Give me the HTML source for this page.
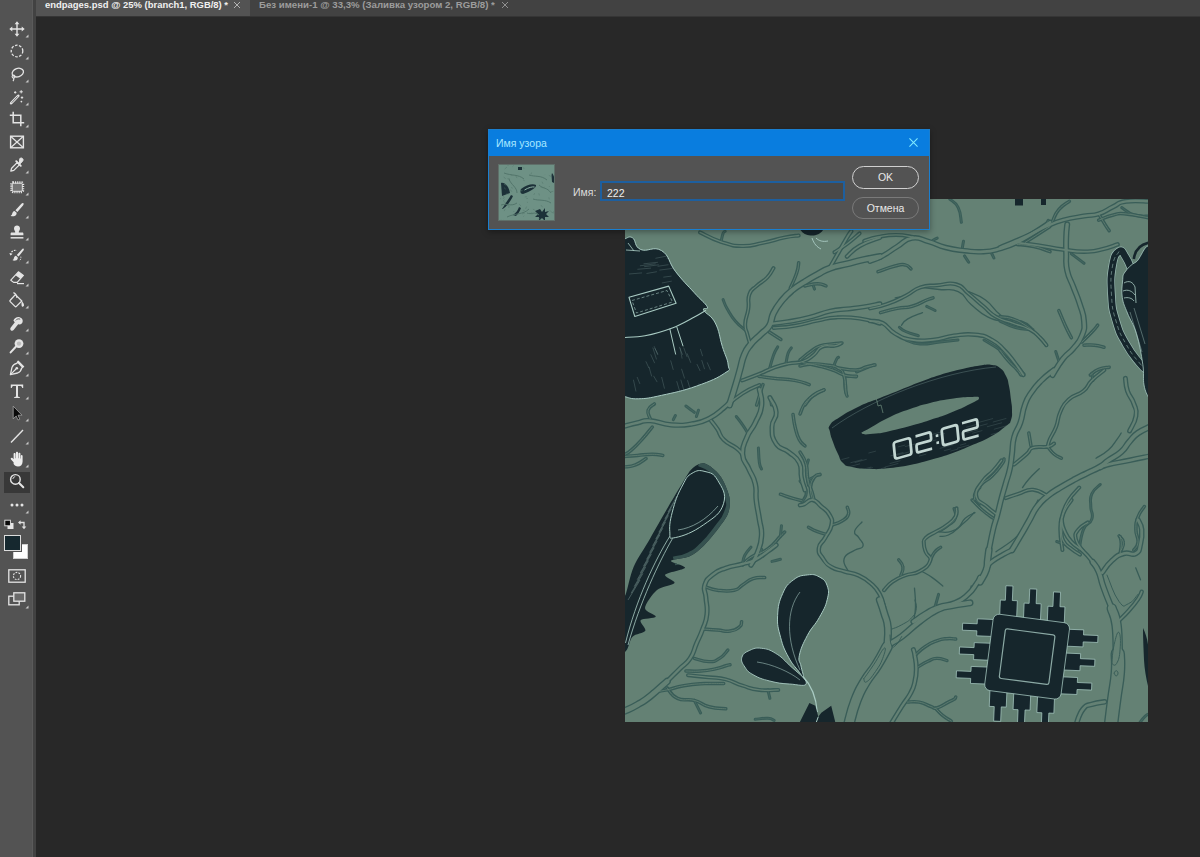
<!DOCTYPE html>
<html><head><meta charset="utf-8">
<style>
*{box-sizing:border-box;margin:0;padding:0}
html,body{width:1200px;height:857px;overflow:hidden;background:#282828;font-family:"Liberation Sans",sans-serif;}
#tabbar{position:absolute;left:0;top:0;width:1200px;height:17px;background:#424242;border-bottom:1px solid #353535;}
.tab{position:absolute;top:0;height:17px;font-weight:bold;font-size:9px;line-height:10px;white-space:nowrap;}
#tab1{left:36px;width:214px;height:16px;background:#535353;color:#f0f0f0;}
#tab2{left:250px;width:266px;color:#9c9c9c;}
#tab2 span.t{transform:scaleX(1.072)}
.tab span.t{position:absolute;left:9px;top:0px;display:inline-block;transform-origin:0 0;transform:scaleX(1.050);}
.tab svg{position:absolute;top:2px;}
#toolbar{position:absolute;left:0;top:0;width:33px;height:857px;background:#535353;}
#tbedge{position:absolute;left:32px;top:0;width:4px;height:857px;background:#424242;border-left:1px solid #5b5b5b;}
#art{position:absolute;left:625px;top:199px;width:523px;height:523px;background:#648174;overflow:hidden;}
</style></head><body>
<div id="tabbar">
  <div class="tab" id="tab1"><span class="t">endpages.psd @ 25% (branch1, RGB/8) *</span>
    <svg style="left:197px;top:1px" width="8" height="8" viewBox="0 0 8 8"><path d="M1 1l6 6M7 1L1 7" stroke="#bdbdbd" stroke-width="0.9"/></svg></div>
  <div class="tab" id="tab2"><span class="t">Без имени-1 @ 33,3% (Заливка узором 2, RGB/8) *</span>
    <svg style="left:251px;top:1px" width="8" height="8" viewBox="0 0 8 8"><path d="M1 1l6 6M7 1L1 7" stroke="#9a9a9a" stroke-width="0.9"/></svg></div>
</div>
<div id="toolbar">
<div id="zoomhl" style="position:absolute;left:4px;top:472px;width:26px;height:21px;background:#383838;"></div>
<svg style="position:absolute;left:9px;top:21px" width="16" height="16" viewBox="0 0 16 16"><path d="M8 2v12M2 8h12" stroke="#e4e4e4" stroke-width="1.4" fill="none"/><path d="M8 0.3l2.4 3h-4.8zM8 15.7l2.4-3h-4.8zM0.3 8l3-2.4v4.8zM15.7 8l-3-2.4v4.8z" fill="#e4e4e4"/></svg>
<svg style="position:absolute;left:25px;top:34px" width="4" height="4" viewBox="0 0 4 4"><path d="M3.500 0.500v3h-3z" fill="#c8c8c8"/></svg>
<svg style="position:absolute;left:9px;top:43px" width="16" height="16" viewBox="0 0 16 16"><circle cx="8" cy="8" r="5.8" stroke="#e4e4e4" stroke-width="1.3" fill="none" stroke-dasharray="2.6 1.5"/></svg>
<svg style="position:absolute;left:25px;top:56px" width="4" height="4" viewBox="0 0 4 4"><path d="M3.500 0.500v3h-3z" fill="#c8c8c8"/></svg>
<svg style="position:absolute;left:9px;top:66px" width="16" height="16" viewBox="0 0 16 16"><ellipse cx="8.8" cy="6.6" rx="5.8" ry="4.2" transform="rotate(-18 8.8 6.6)" stroke="#e4e4e4" stroke-width="1.3" fill="none"/><circle cx="4.6" cy="10.6" r="1.5" stroke="#e4e4e4" stroke-width="1.1" fill="none"/><path d="M4.6 12c0.4 1.2 0.2 2.2-0.6 3.2" stroke="#e4e4e4" stroke-width="1.2" fill="none"/></svg>
<svg style="position:absolute;left:25px;top:79px" width="4" height="4" viewBox="0 0 4 4"><path d="M3.500 0.500v3h-3z" fill="#c8c8c8"/></svg>
<svg style="position:absolute;left:9px;top:89px" width="16" height="16" viewBox="0 0 16 16"><path d="M2.2 14.2l7-7.4" stroke="#e4e4e4" stroke-width="2.6" stroke-linecap="round"/><path d="M3 13.4l5.4-5.7" stroke="#535353" stroke-width="0.8" stroke-linecap="round"/><path d="M12.2 1.2v3.2M10.6 2.8h3.2M6.2 2.2v2.4M5 3.4h2.4M13 7.4v2.4M11.8 8.6h2.4M12.4 11.8v1.6M11.6 12.6h1.6" stroke="#e4e4e4" stroke-width="1"/></svg>
<svg style="position:absolute;left:25px;top:102px" width="4" height="4" viewBox="0 0 4 4"><path d="M3.500 0.500v3h-3z" fill="#c8c8c8"/></svg>
<svg style="position:absolute;left:9px;top:111px" width="16" height="16" viewBox="0 0 16 16"><path d="M4.2 0.8v11h11M0.8 4.2h11v11" stroke="#e4e4e4" stroke-width="1.5" fill="none"/></svg>
<svg style="position:absolute;left:25px;top:124px" width="4" height="4" viewBox="0 0 4 4"><path d="M3.500 0.500v3h-3z" fill="#c8c8c8"/></svg>
<svg style="position:absolute;left:9px;top:134px" width="16" height="16" viewBox="0 0 16 16"><rect x="1.6" y="2.2" width="12.8" height="11.6" stroke="#e4e4e4" stroke-width="1.4" fill="none"/><path d="M1.6 2.2l12.8 11.6M14.4 2.2L1.6 13.8" stroke="#e4e4e4" stroke-width="1.2"/></svg>
<svg style="position:absolute;left:9px;top:157px" width="16" height="16" viewBox="0 0 16 16"><path d="M1.800 14.200l0.800-3 5.800-5.800 2.200 2.200-5.800 5.800z" stroke="#e4e4e4" stroke-width="1.300" fill="none" stroke-linejoin="round"/><path d="M7.200 4.200l4.600 4.600" stroke="#e4e4e4" stroke-width="1.900" stroke-linecap="round"/><path d="M9.400 6.600l3.200-3.200a1.900 1.900 0 0 0-2.700-2.700z" fill="#e4e4e4" stroke="#e4e4e4" stroke-width="1" transform="translate(0.900 0.900)"/></svg>
<svg style="position:absolute;left:25px;top:170px" width="4" height="4" viewBox="0 0 4 4"><path d="M3.500 0.500v3h-3z" fill="#c8c8c8"/></svg>
<svg style="position:absolute;left:9px;top:179px" width="16" height="16" viewBox="0 0 16 16"><rect x="3" y="4" width="10.500" height="8.500" rx="1.200" fill="#747474"/><rect x="2.400" y="3.400" width="11.700" height="9.700" rx="1.500" stroke="#e4e4e4" stroke-width="2.200" fill="none" stroke-dasharray="1.100 1.050"/><rect x="3.200" y="4.200" width="10.100" height="8.100" rx="1" stroke="#e4e4e4" stroke-width="0.900" fill="none"/></svg>
<svg style="position:absolute;left:25px;top:192px" width="4" height="4" viewBox="0 0 4 4"><path d="M3.500 0.500v3h-3z" fill="#c8c8c8"/></svg>
<svg style="position:absolute;left:9px;top:202px" width="16" height="16" viewBox="0 0 16 16"><path d="M14.4 1.2c0.6 0.6 0.2 1.4-0.4 2.2L8.4 10 6.4 8.2l6-6.4c0.6-0.7 1.4-1.2 2-0.6z" fill="#e4e4e4"/><path d="M5.6 9l2 1.8c0.2 1.6-0.8 3-2.6 3.4-1.200.3-2.400.2-3.400-0.400 1.200-0.400 1.400-1.200 1.600-2.200 0.300-1.400 1.200-2.400 2.400-2.600z" fill="#e4e4e4"/></svg>
<svg style="position:absolute;left:25px;top:215px" width="4" height="4" viewBox="0 0 4 4"><path d="M3.500 0.500v3h-3z" fill="#c8c8c8"/></svg>
<svg style="position:absolute;left:9px;top:224px" width="16" height="16" viewBox="0 0 16 16"><path d="M6.200 8.400c0.300-1.300-1.200-2.200-1.200-4 0-1.700 1.300-3 3-3s3 1.300 3 3c0 1.800-1.500 2.700-1.200 4h3.400c0.800 0 1.200 0.500 1.200 1.200v1.600H1.600V9.600c0-0.700 0.400-1.200 1.200-1.200z" fill="#e4e4e4"/><path d="M1.600 13.800h12.800" stroke="#e4e4e4" stroke-width="1.500"/></svg>
<svg style="position:absolute;left:25px;top:237px" width="4" height="4" viewBox="0 0 4 4"><path d="M3.500 0.500v3h-3z" fill="#c8c8c8"/></svg>
<svg style="position:absolute;left:9px;top:247px" width="16" height="16" viewBox="0 0 16 16"><path d="M14.600 1.800c0.500 0.500 0.200 1.200-0.400 2L9.600 9.600 7.800 8l5-5.600c0.600-0.600 1.300-1.100 1.800-0.600z" fill="#e4e4e4"/><path d="M7 8.800l1.800 1.600c0.200 1.500-0.700 2.700-2.300 3.100-1.100 0.300-2.200 0.200-3.100-0.400 1.100-0.400 1.300-1.100 1.500-2 0.300-1.300 1-2.100 2.100-2.300z" fill="#e4e4e4"/><path d="M1.600 7.600a4.600 4.600 0 0 1 6-4" stroke="#e4e4e4" stroke-width="1.100" fill="none" stroke-dasharray="1.600 1"/><path d="M0.200 6.200l1.400 2.400 2-1.800z" fill="#e4e4e4"/><path d="M11.800 9.600c0.400 1.600-0.200 3.400-1.400 4.400" stroke="#e4e4e4" stroke-width="0.900" fill="none" stroke-dasharray="1.200 1"/></svg>
<svg style="position:absolute;left:25px;top:260px" width="4" height="4" viewBox="0 0 4 4"><path d="M3.500 0.500v3h-3z" fill="#c8c8c8"/></svg>
<svg style="position:absolute;left:9px;top:270px" width="16" height="16" viewBox="0 0 16 16"><path d="M9.400 1.800l5 3.600-6.200 7H4.600L1.800 10.200z" stroke="#e4e4e4" stroke-width="1.200" fill="none" stroke-linejoin="round"/><path d="M9.400 1.800l5 3.600-3 3.400-5-3.600z" fill="#e4e4e4"/><path d="M8 13.600h7" stroke="#e4e4e4" stroke-width="1.200"/></svg>
<svg style="position:absolute;left:25px;top:283px" width="4" height="4" viewBox="0 0 4 4"><path d="M3.500 0.500v3h-3z" fill="#c8c8c8"/></svg>
<svg style="position:absolute;left:9px;top:292px" width="16" height="16" viewBox="0 0 16 16"><path d="M6.400 2.600l6.400 6.400-5.400 5.400c-0.400 0.400-1 0.400-1.400 0L1.200 9.600c-0.400-0.400-0.400-1 0-1.400z" stroke="#e4e4e4" stroke-width="1.300" fill="none" stroke-linejoin="round"/><path d="M4.400 0.600c1.800 0.600 3.200 2.600 3.600 5.400" stroke="#e4e4e4" stroke-width="1.200" fill="none"/><path d="M12.800 9c1.400 1.600 2.400 3.200 2.200 4.600-0.200 1.200-1.600 1.600-2.200 0.600-0.600-1.200-0.200-3.400 0-5.200z" fill="#e4e4e4"/></svg>
<svg style="position:absolute;left:25px;top:305px" width="4" height="4" viewBox="0 0 4 4"><path d="M3.500 0.500v3h-3z" fill="#c8c8c8"/></svg>
<svg style="position:absolute;left:9px;top:315px" width="16" height="16" viewBox="0 0 16 16"><path d="M4.400 5.600c1-2.600 3.600-4 6.200-3.400 2.400 0.600 3.600 2.600 3 4.800-0.400 1.600-1.600 2.400-3 2.600l-1.400-0.400-4.600 5.800c-0.600 0.800-1.800 1-2.600 0.400-0.800-0.600-1-1.800-0.400-2.600l4.200-5.600z" fill="#e4e4e4"/><path d="M6.800 5.400c1-1.400 2.800-2 4.400-1.200" stroke="#535353" stroke-width="0.900" fill="none"/></svg>
<svg style="position:absolute;left:25px;top:328px" width="4" height="4" viewBox="0 0 4 4"><path d="M3.500 0.500v3h-3z" fill="#c8c8c8"/></svg>
<svg style="position:absolute;left:9px;top:338px" width="16" height="16" viewBox="0 0 16 16"><circle cx="10" cy="5.600" r="4.400" fill="#e4e4e4"/><path d="M6.800 8.800L1.600 14.400" stroke="#e4e4e4" stroke-width="2" stroke-linecap="round"/><circle cx="10" cy="5.600" r="2.200" fill="#bdbdbd"/></svg>
<svg style="position:absolute;left:25px;top:351px" width="4" height="4" viewBox="0 0 4 4"><path d="M3.500 0.500v3h-3z" fill="#c8c8c8"/></svg>
<svg style="position:absolute;left:9px;top:360px" width="16" height="16" viewBox="0 0 16 16"><path d="M9.200 1.200l5.400 5.400-2 1.600c-0.400 2.400-1.800 4-4 4.800L1.400 14.600l1.600-7.200c0.800-2.200 2.400-3.600 4.800-4z" stroke="#e4e4e4" stroke-width="1.300" fill="none" stroke-linejoin="round"/><path d="M1.600 14.400l5.400-5.400" stroke="#e4e4e4" stroke-width="1.100"/><circle cx="7.800" cy="8.200" r="1.300" fill="#e4e4e4"/><path d="M9.200 1.200l5.400 5.400-1.400 1.200-5.200-5.400z" fill="#e4e4e4"/></svg>
<svg style="position:absolute;left:25px;top:373px" width="4" height="4" viewBox="0 0 4 4"><path d="M3.500 0.500v3h-3z" fill="#c8c8c8"/></svg>
<svg style="position:absolute;left:9px;top:383px" width="16" height="16" viewBox="0 0 16 16"><path d="M1.800 1.600h12.400v3.400h-1c-0.200-1.400-0.800-2-2.200-2H9v9.800c0 0.800 0.400 1.200 1.800 1.300v0.900H5.200v-0.900C6.600 14 7 13.600 7 12.800V3H5c-1.400 0-2 0.600-2.200 2h-1z" fill="#e4e4e4"/></svg>
<svg style="position:absolute;left:25px;top:396px" width="4" height="4" viewBox="0 0 4 4"><path d="M3.500 0.500v3h-3z" fill="#c8c8c8"/></svg>
<svg style="position:absolute;left:9px;top:405px" width="16" height="16" viewBox="0 0 16 16"><path d="M4.200 1.200v12.600l3-2.800 1.800 4 1.800-0.800-1.800-4h4z" fill="#0a0a0a" stroke="#b0b0b0" stroke-width="0.700" stroke-linejoin="round"/></svg>
<svg style="position:absolute;left:25px;top:418px" width="4" height="4" viewBox="0 0 4 4"><path d="M3.500 0.500v3h-3z" fill="#c8c8c8"/></svg>
<svg style="position:absolute;left:9px;top:428px" width="16" height="16" viewBox="0 0 16 16"><path d="M2 14.400L14 2" stroke="#e4e4e4" stroke-width="1.400"/></svg>
<svg style="position:absolute;left:25px;top:441px" width="4" height="4" viewBox="0 0 4 4"><path d="M3.500 0.500v3h-3z" fill="#c8c8c8"/></svg>
<svg style="position:absolute;left:9px;top:451px" width="16" height="16" viewBox="0 0 16 16"><path d="M4.600 11.200L2 8.400c-0.900-1 0.500-2.300 1.500-1.400L4.600 8.200V3c0-1.300 2-1.300 2 0V7.200h0.400V1.600c0-1.300 2-1.300 2 0V7.200h0.400V2.600c0-1.300 2-1.300 2 0V7.600h0.400V5c0-1.200 1.800-1.200 1.800 0V10.500c0 3-1.800 5-4.600 5-2.200 0-3.400-1-4.400-2.500z" fill="#ededed"/></svg>
<svg style="position:absolute;left:25px;top:464px" width="4" height="4" viewBox="0 0 4 4"><path d="M3.500 0.500v3h-3z" fill="#c8c8c8"/></svg>
<svg style="position:absolute;left:9px;top:473px" width="16" height="16" viewBox="0 0 16 16"><circle cx="6.400" cy="6.400" r="4.800" stroke="#e6e6e6" stroke-width="1.400" fill="none"/><path d="M10 10l4.300 4.300" stroke="#e6e6e6" stroke-width="2" stroke-linecap="round"/><path d="M3.800 6a2.800 2.800 0 0 1 2.400-2.400" stroke="#e6e6e6" stroke-width="0.900" fill="none"/></svg>
<svg style="position:absolute;left:9px;top:497px" width="16" height="16" viewBox="0 0 16 16"><circle cx="3" cy="8" r="1.500" fill="#e4e4e4"/><circle cx="8" cy="8" r="1.500" fill="#e4e4e4"/><circle cx="13" cy="8" r="1.500" fill="#e4e4e4"/></svg>
<svg style="position:absolute;left:25px;top:510px" width="4" height="4" viewBox="0 0 4 4"><path d="M3.500 0.500v3h-3z" fill="#c8c8c8"/></svg>
<svg style="position:absolute;left:4px;top:519px" width="26" height="12" viewBox="0 0 26 12"><rect x="3.500" y="4" width="6" height="6" fill="#e6e6e6"/><rect x="0.800" y="1.200" width="5.600" height="5.600" fill="#0a0a0a" stroke="#e6e6e6" stroke-width="0.900"/><path d="M15.500 3.500h4.500v5" stroke="#e0e0e0" stroke-width="1.300" fill="none"/><path d="M16.600 1.200l-2.600 2.300 2.600 2.300zM17.700 7.400l2.300 2.800 2.300-2.800z" fill="#e0e0e0"/></svg>
<div style="position:absolute;left:13px;top:544px;width:15px;height:15px;background:#fff;border:1px solid #d0d0d0"></div>
<div style="position:absolute;left:4px;top:535px;width:17px;height:16px;background:#16282f;border:1px solid #dcdcdc;box-shadow:0 0 0 1px #535353"></div>
<svg style="position:absolute;left:8px;top:569px" width="18" height="14" viewBox="0 0 18 14"><rect x="0.800" y="0.800" width="16.400" height="12.400" stroke="#e4e4e4" stroke-width="1.300" fill="none"/><circle cx="9" cy="7" r="3.600" stroke="#e4e4e4" stroke-width="1.100" fill="none" stroke-dasharray="1.800 1.200"/></svg>
<svg style="position:absolute;left:8px;top:592px" width="18" height="14" viewBox="0 0 18 14"><rect x="0.800" y="4.200" width="10.400" height="8.600" stroke="#e4e4e4" stroke-width="1.300" fill="#535353"/><rect x="5.800" y="0.800" width="11" height="8.400" stroke="#e4e4e4" stroke-width="1.300" fill="#6a6a6a"/></svg>
<svg style="position:absolute;left:25px;top:605px" width="4" height="4" viewBox="0 0 4 4"><path d="M3.500 0.500v3h-3z" fill="#c8c8c8"/></svg></div><div id="tbedge"></div>
<div id="art">
<svg width="523" height="523" viewBox="625 199 523 523" style="position:absolute;left:0;top:0">
<rect x="625" y="199" width="523" height="523" fill="#648174"/>
<g fill="none" stroke="#395d58" stroke-linecap="round" stroke-linejoin="round"><path d="M880.0 256.5C875.7 257.3 872.6 257.7 863.8 259.7C855.0 261.6 856.0 261.6 847.0 263.9C838.1 266.1 838.1 265.3 830.2 268.1C822.4 270.9 824.3 270.7 817.6 274.4C810.9 278.0 811.7 277.5 805.0 281.7C798.3 285.9 798.6 285.1 792.4 290.1C786.3 295.2 787.0 294.5 781.9 300.6C776.9 306.8 776.9 306.5 773.5 313.2C770.2 319.9 772.7 320.2 769.3 325.8C766.0 331.4 766.0 329.2 760.9 334.2C755.9 339.3 754.9 339.1 750.4 344.7C745.9 350.3 746.9 348.5 744.1 355.2C741.3 361.9 742.1 362.1 739.9 369.9C737.7 377.8 738.5 375.3 735.7 384.6C732.9 394.0 731.1 399.6 729.4 405.0" stroke-width="7.0"/><path d="M830.2 267.0C832.5 263.1 834.1 260.1 838.6 252.3C843.1 244.5 843.7 243.2 847.0 237.6C850.4 232.0 850.1 233.0 851.2 231.3" stroke-width="4.5"/><path d="M847.0 256.5C850.4 253.7 850.8 251.0 859.6 246.0C868.4 241.0 874.6 239.8 880.0 237.6" stroke-width="4.5"/><path d="M834.4 252.3C837.8 250.1 840.3 248.9 847.0 243.9C853.7 238.9 856.3 236.2 859.6 233.4" stroke-width="4.0"/><path d="M700.0 232.4C705.6 234.9 709.8 238.2 721.0 241.8C732.2 245.4 730.8 245.7 742.0 246.0C753.2 246.3 751.8 245.1 763.0 242.9C774.2 240.6 774.5 239.6 784.0 237.6C793.5 235.6 794.8 236.1 798.7 235.5" stroke-width="4.0"/><path d="M721.0 241.8C721.6 239.6 722.0 236.2 723.1 233.4C724.2 230.6 724.6 231.9 725.2 231.3" stroke-width="3.0"/><path d="M790.3 288.0C792.0 284.1 794.4 280.0 796.6 273.3C798.9 266.6 798.2 265.6 798.7 262.8" stroke-width="3.5"/><path d="M805.0 285.9C808.4 285.4 812.0 283.8 817.6 283.8C823.2 283.8 823.8 285.4 826.0 285.9" stroke-width="3.5"/><path d="M813.4 285.9C813.7 286.8 814.2 288.2 814.5 289.1" stroke-width="3.0"/><path d="M771.4 323.7C775.9 323.2 778.1 323.3 788.2 321.6C798.3 319.9 798.0 320.2 809.2 317.4C820.4 314.6 820.1 313.4 830.2 311.1C840.3 308.9 838.1 310.1 847.0 309.0C856.0 307.9 855.0 308.3 863.8 306.9C872.6 305.5 875.7 304.6 880.0 303.8" stroke-width="5.0"/><path d="M773.5 327.9C779.1 327.4 782.8 327.8 794.5 325.8C806.3 323.9 806.4 322.8 817.6 320.6C828.8 318.3 825.3 318.0 836.5 317.4C847.7 316.9 848.0 316.8 859.6 318.5C871.2 320.1 874.6 322.3 880.0 323.7" stroke-width="4.0"/><path d="M769.3 332.1C772.4 334.1 777.8 337.5 780.9 339.5" stroke-width="3.5"/><path d="M750.4 344.7C749.6 341.9 748.7 339.8 747.3 334.2C745.9 328.6 744.9 330.4 745.2 323.7C745.4 317.0 747.2 316.9 748.3 309.0C749.4 301.2 747.1 300.5 749.4 294.3C751.6 288.2 751.9 290.4 756.7 285.9C761.5 281.4 762.7 282.3 767.2 277.5C771.7 272.7 771.8 270.6 773.5 268.1" stroke-width="4.0"/><path d="M745.2 330.0C742.6 327.8 740.5 327.2 735.7 321.6C730.9 316.0 730.7 314.9 727.3 309.0C723.9 303.1 724.2 302.1 723.1 299.6" stroke-width="3.0"/><path d="M742.0 380.4C746.5 378.7 750.4 377.5 758.8 374.1C767.2 370.8 765.7 370.6 773.5 367.8C781.4 365.0 780.4 365.3 788.2 363.6C796.1 361.9 796.2 363.8 802.9 361.5C809.6 359.3 808.4 359.1 813.4 355.2C818.5 351.3 816.2 349.3 821.8 346.8C827.4 344.3 829.4 346.6 834.4 345.8C839.5 344.9 839.0 344.2 840.7 343.7" stroke-width="4.0"/><path d="M802.9 362.6C806.8 363.4 809.8 363.8 817.6 365.7C825.5 367.7 825.0 367.4 832.3 369.9C839.6 372.4 838.5 373.5 844.9 375.2C851.4 376.9 853.4 375.9 856.5 376.2" stroke-width="3.5"/><path d="M832.3 369.9C833.4 367.1 834.8 362.8 836.5 359.4C838.2 356.1 838.1 357.9 838.6 357.3" stroke-width="3.0"/><path d="M844.9 375.2C844.9 378.3 844.6 382.0 844.9 386.7C845.2 391.5 845.7 391.4 846.0 393.0" stroke-width="3.0"/><path d="M856.5 372.0C861.2 370.1 869.6 366.6 874.3 364.7" stroke-width="3.0"/><path d="M769.3 369.9C770.4 366.0 771.3 361.4 773.5 355.2C775.8 349.1 776.6 349.1 777.7 346.8" stroke-width="3.0"/><path d="M786.1 362.6C786.7 360.1 786.8 357.0 788.2 353.1C789.6 349.2 790.5 349.3 791.4 347.9" stroke-width="3.0"/><path d="M758.8 376.2C762.7 376.8 764.0 377.2 773.5 378.3C783.0 379.4 785.0 378.7 794.5 380.4C804.0 382.1 805.3 383.5 809.2 384.6" stroke-width="3.5"/><path d="M756.7 405.0C757.8 401.3 759.2 396.4 760.9 390.9C762.6 385.5 762.5 386.3 763.0 384.6" stroke-width="3.5"/><path d="M805.0 405.0C807.3 402.4 808.4 399.2 813.4 395.1C818.5 391.1 821.1 391.3 823.9 389.9" stroke-width="3.5"/><path d="M771.4 405.0C771.1 402.9 770.6 399.3 770.4 397.2" stroke-width="3.0"/><path d="M870.0 261.2C873.4 259.8 875.3 259.8 882.6 255.9C889.9 252.0 889.5 251.2 897.3 246.5C905.1 241.7 903.6 239.3 912.0 238.1C920.4 236.8 919.8 239.1 928.8 241.6C937.8 244.1 936.1 245.1 945.6 247.5C955.1 249.9 954.4 249.5 964.5 250.7C974.6 251.8 973.9 252.3 983.4 251.7C992.9 251.2 991.3 251.1 1000.2 248.6C1009.2 246.0 1008.1 246.5 1017.0 242.3C1026.0 238.1 1025.0 238.1 1033.8 232.8C1042.6 227.5 1045.7 225.1 1050.0 222.3" stroke-width="5.5"/><path d="M864.1 241.0C867.8 239.9 869.5 238.6 878.0 237.0C886.5 235.4 886.7 234.9 896.0 234.9C905.4 234.9 908.5 236.4 913.1 237.0" stroke-width="4.0"/><path d="M878.0 271.7C882.5 270.2 887.8 267.8 895.0 266.0C902.2 264.2 900.8 264.2 905.1 264.9C909.3 265.7 909.4 267.9 911.0 268.9" stroke-width="3.5"/><path d="M962.4 247.5C962.7 245.8 963.2 242.9 963.5 241.2" stroke-width="3.0"/><path d="M933.0 240.2C934.1 239.6 936.1 238.6 937.2 238.1" stroke-width="3.0"/><path d="M964.5 255.9C965.6 257.6 967.6 260.5 968.7 262.2" stroke-width="3.0"/><path d="M991.8 253.8C992.4 254.9 993.4 256.9 993.9 258.0" stroke-width="3.0"/><path d="M1017.0 244.4C1021.5 244.9 1025.0 244.5 1033.8 246.5C1042.6 248.4 1045.7 250.3 1050.0 251.7" stroke-width="3.5"/><path d="M1025.4 242.3C1032.0 238.1 1043.5 230.7 1050.0 226.5" stroke-width="3.5"/><path d="M949.8 199.2C952.1 201.4 955.1 201.4 958.2 207.6C961.3 213.8 960.5 218.4 961.4 222.3" stroke-width="3.0"/><path d="M870.0 308.4C874.5 307.3 877.3 307.6 886.8 304.2C896.3 300.9 896.7 300.3 905.7 295.8C914.7 291.3 912.0 290.2 920.4 287.4C928.8 284.6 927.7 286.2 937.2 285.3C946.7 284.5 947.7 282.0 956.1 284.3C964.5 286.5 961.4 287.8 968.7 293.7C976.0 299.6 976.1 300.2 983.4 306.3C990.7 312.5 988.2 312.3 996.0 316.8C1003.9 321.3 1003.9 319.8 1012.8 323.1C1021.8 326.5 1022.3 325.5 1029.6 329.4C1036.9 333.3 1035.7 333.6 1040.1 337.8C1044.6 342.0 1044.8 343.2 1046.4 345.2" stroke-width="4.0"/><path d="M920.4 287.4C925.5 288.0 929.2 288.4 939.3 289.5C949.4 290.6 949.8 287.7 958.2 291.6C966.6 295.5 963.0 297.5 970.8 304.2C978.7 310.9 978.7 312.3 987.6 316.8C996.6 321.3 995.5 319.9 1004.4 321.0C1013.4 322.1 1013.4 318.8 1021.2 321.0C1029.1 323.3 1030.5 327.2 1033.8 329.4" stroke-width="1.3"/><path d="M968.7 291.6C973.2 293.9 977.1 293.9 985.5 300.0C993.9 306.2 991.8 308.0 1000.2 314.7C1008.6 321.4 1009.2 321.3 1017.0 325.2C1024.9 329.1 1026.3 328.3 1029.6 329.4" stroke-width="1.3"/><path d="M880.5 312.6C885.0 311.5 888.9 310.1 897.3 308.4C905.7 306.7 904.2 308.6 912.0 306.3C919.8 304.1 921.1 302.3 926.7 300.0C932.3 297.8 931.3 298.5 933.0 297.9" stroke-width="3.5"/><path d="M926.7 306.3C929.0 307.4 932.9 309.4 935.1 310.5" stroke-width="3.0"/><path d="M901.5 325.2C903.2 323.5 902.2 322.3 907.8 318.9C913.4 315.6 918.6 314.3 922.5 312.6" stroke-width="1.3"/><path d="M870.0 321.0C873.4 321.6 875.9 319.8 882.6 323.1C889.3 326.5 887.4 329.1 895.2 333.6C903.0 338.1 901.9 338.2 912.0 339.9C922.1 341.6 921.8 341.0 933.0 339.9C944.2 338.8 942.8 337.1 954.0 335.7C965.2 334.3 964.9 333.6 975.0 334.7C985.1 335.8 984.0 335.7 991.8 339.9C999.7 344.1 998.3 344.3 1004.4 350.4C1010.6 356.6 1009.9 356.5 1014.9 363.0C1020.0 369.6 1021.1 371.8 1023.3 375.0" stroke-width="4.5"/><path d="M899.4 327.3C901.1 328.4 900.7 329.3 905.7 331.5C910.7 333.8 914.9 334.6 918.3 335.7" stroke-width="3.0"/><path d="M895.2 297.9C896.9 297.6 899.8 297.1 901.5 296.9" stroke-width="1.3"/><path d="M1067.2 224.4C1066.9 227.8 1066.4 229.2 1066.2 237.0C1065.9 244.8 1065.9 244.8 1066.2 253.8C1066.4 262.8 1065.3 261.7 1067.2 270.6C1069.2 279.6 1070.2 278.5 1073.5 287.4C1076.9 296.4 1077.0 295.3 1079.8 304.2C1082.6 313.2 1083.5 312.6 1084.0 321.0C1084.6 329.4 1084.7 328.4 1081.9 335.7C1079.1 343.0 1078.6 342.2 1073.5 348.3C1068.5 354.5 1068.6 351.7 1063.0 358.8C1057.4 365.9 1055.3 370.7 1052.5 375.0" stroke-width="6.0"/><path d="M1000.0 247.5C1003.4 246.1 1004.8 245.6 1012.6 242.3C1020.4 238.9 1020.4 239.1 1029.4 234.9C1038.4 230.7 1037.2 230.4 1046.2 226.5C1055.2 222.6 1052.9 223.0 1063.0 220.2C1073.1 217.4 1074.5 217.7 1084.0 216.0C1093.5 214.3 1090.9 216.4 1098.7 213.9C1106.6 211.4 1106.1 209.9 1113.4 206.6C1120.7 203.2 1116.3 202.7 1126.0 201.3C1135.8 199.9 1143.6 201.3 1150.0 201.3" stroke-width="5.0"/><path d="M1052.5 221.3C1054.2 218.2 1054.3 215.0 1058.8 209.7C1063.3 204.4 1066.5 203.5 1069.3 201.3" stroke-width="3.5"/><path d="M1046.2 224.4C1046.8 223.3 1047.7 221.3 1048.3 220.2" stroke-width="3.0"/><path d="M1098.7 213.9C1100.4 216.7 1102.2 219.9 1105.0 224.4C1107.8 228.9 1108.1 229.0 1109.2 230.7" stroke-width="3.5"/><path d="M1098.7 220.2C1102.6 218.8 1106.1 216.6 1113.4 215.0C1120.7 213.3 1116.3 213.1 1126.0 213.9C1135.8 214.7 1143.6 217.0 1150.0 218.1" stroke-width="3.5"/><path d="M1121.8 207.6C1125.2 209.6 1126.9 212.7 1134.4 215.0C1141.9 217.2 1145.8 215.7 1150.0 216.0" stroke-width="3.0"/><path d="M1014.7 242.3C1020.9 243.1 1024.9 243.4 1037.8 245.4C1050.7 247.4 1050.7 247.9 1063.0 249.6C1075.3 251.3 1073.9 251.7 1084.0 251.7C1094.1 251.7 1091.9 251.6 1100.8 249.6C1109.8 247.7 1113.1 245.8 1117.6 244.4" stroke-width="4.5"/><path d="M1071.4 253.8C1074.8 256.3 1080.7 260.7 1084.0 263.3" stroke-width="3.0"/><path d="M1000.0 316.8C1003.4 317.4 1005.9 316.7 1012.6 318.9C1019.3 321.2 1019.0 321.3 1025.2 325.2C1031.4 329.1 1030.1 328.3 1035.7 333.6C1041.3 338.9 1043.4 342.1 1046.2 345.2" stroke-width="3.5"/><path d="M1000.0 321.0C1003.9 322.7 1006.9 325.1 1014.7 327.3C1022.5 329.6 1025.5 328.9 1029.4 329.4" stroke-width="3.0"/><path d="M1058.8 310.5C1060.5 314.4 1061.8 317.9 1065.1 325.2C1068.5 332.5 1069.7 334.5 1071.4 337.8" stroke-width="3.5"/><path d="M1081.9 342.0C1084.7 339.2 1088.2 336.0 1092.4 331.5C1096.6 327.0 1096.3 326.9 1097.7 325.2" stroke-width="3.5"/><path d="M1084.0 345.2C1086.8 345.2 1089.2 344.6 1094.5 345.2C1099.8 345.7 1101.4 346.7 1104.0 347.3" stroke-width="3.5"/><path d="M1000.0 350.4C1002.2 353.2 1003.9 355.9 1008.4 360.9C1012.9 366.0 1013.4 365.6 1016.8 369.3C1020.2 373.1 1019.9 373.5 1021.0 375.0" stroke-width="3.5"/><path d="M1055.7 351.5C1056.5 354.0 1058.0 358.4 1058.8 360.9" stroke-width="3.0"/><path d="M1090.3 375.0C1092.6 373.5 1093.7 371.4 1098.7 369.3C1103.8 367.3 1106.4 367.8 1109.2 367.2" stroke-width="3.5"/><path d="M730.0 401.8C728.3 403.5 729.3 403.6 723.7 408.1C718.1 412.6 717.4 414.4 709.0 418.6C700.6 422.8 702.3 422.2 692.2 423.9C682.1 425.5 682.4 425.7 671.2 424.9C660.0 424.1 659.2 421.3 650.2 420.7C641.2 420.1 644.3 421.4 637.6 422.8C630.9 424.2 628.4 425.1 625.0 426.0" stroke-width="5.3"/><path d="M650.2 418.6C649.6 416.4 647.0 414.1 648.1 410.2C649.2 406.3 652.7 405.6 654.4 403.9" stroke-width="3.5"/><path d="M673.3 419.7C673.9 418.5 674.8 416.6 675.4 415.5" stroke-width="3.0"/><path d="M694.3 412.3C692.1 410.6 688.2 407.7 685.9 406.0" stroke-width="3.0"/><path d="M696.4 416.5C697.0 414.8 698.0 411.9 698.5 410.2" stroke-width="3.0"/><path d="M723.7 408.1C728.8 404.2 733.1 399.6 742.6 393.4C752.1 387.2 754.9 387.2 759.4 385.0" stroke-width="4.0"/><path d="M759.4 389.2C760.0 393.7 762.6 397.0 761.5 406.0C760.4 415.0 759.1 414.4 755.2 422.8C751.3 431.2 750.2 429.1 746.8 437.5C743.5 445.9 742.1 445.9 742.6 454.3C743.2 462.7 745.6 461.2 748.9 469.0C752.3 476.9 753.3 475.3 755.2 483.7C757.2 492.1 755.2 491.0 756.3 500.5C757.4 510.0 758.0 509.9 759.4 519.4C760.8 528.9 762.1 527.3 761.5 536.2C761.0 545.2 760.1 545.4 757.3 553.0C754.5 560.7 752.7 561.8 751.0 565.0" stroke-width="5.5"/><path d="M711.1 420.7C712.8 422.9 714.1 424.1 717.4 429.1C720.8 434.1 718.7 434.6 723.7 439.6C728.8 444.7 731.3 444.1 736.3 448.0C741.4 451.9 740.9 452.6 742.6 454.3" stroke-width="4.5"/><path d="M736.3 416.5C738.0 418.7 739.5 420.4 742.6 424.9C745.7 429.4 746.5 431.1 747.9 433.3" stroke-width="3.0"/><path d="M758.4 448.0C758.7 451.9 758.6 457.1 759.4 462.7C760.3 468.3 761.0 467.3 761.5 469.0" stroke-width="3.0"/><path d="M769.9 397.6C771.6 401.5 775.7 404.5 776.2 412.3C776.8 420.1 772.0 418.6 772.0 427.0C772.0 435.4 771.7 437.1 776.2 443.8C780.7 450.5 782.7 447.2 788.8 452.2C795.0 457.3 796.0 456.0 799.3 462.7C802.7 469.4 799.9 470.1 801.4 477.4C802.9 484.7 804.1 486.7 805.0 490.0" stroke-width="5.0"/><path d="M793.0 414.4C793.6 417.8 793.5 420.3 795.1 427.0C796.8 433.7 796.7 434.6 799.3 439.6C802.0 444.7 803.5 444.2 805.0 445.9" stroke-width="3.5"/><path d="M780.4 494.2C783.8 495.3 787.4 496.7 793.0 498.4C798.6 500.1 799.2 500.0 801.4 500.5" stroke-width="3.5"/><path d="M625.0 456.4C628.4 456.1 630.3 455.9 637.6 455.4C644.9 454.8 645.6 454.3 652.3 454.3C659.0 454.3 660.0 455.1 662.8 455.4" stroke-width="3.5"/><path d="M625.0 466.9C627.8 466.4 629.9 467.1 635.5 464.8C641.1 462.6 643.2 460.2 646.0 458.5" stroke-width="3.5"/><path d="M652.3 427.0C649.5 430.4 647.4 433.4 641.8 439.6C636.2 445.8 635.8 446.2 631.3 450.1C626.8 454.0 626.7 453.2 625.0 454.3" stroke-width="3.5"/><path d="M742.6 565.0C744.9 562.9 744.3 561.5 751.0 557.2C757.7 552.9 760.0 554.4 767.8 548.8C775.7 543.2 775.9 540.7 780.4 536.2C784.9 531.7 783.5 533.1 784.6 532.0" stroke-width="3.5"/><path d="M780.4 536.2C780.7 533.4 781.2 528.5 781.5 525.7" stroke-width="3.0"/><path d="M772.0 561.4C774.3 560.9 778.2 559.9 780.4 559.3" stroke-width="3.0"/><path d="M1150.0 426.7C1146.8 428.4 1143.5 429.1 1138.0 433.0C1132.6 436.9 1134.1 436.4 1129.6 441.4C1125.1 446.5 1126.8 446.9 1121.2 451.9C1115.6 457.0 1114.2 456.4 1108.6 460.3C1103.0 464.2 1105.8 463.3 1100.2 466.6C1094.6 470.0 1094.3 469.6 1087.6 472.9C1080.9 476.3 1082.3 475.3 1075.0 479.2C1067.7 483.1 1067.6 483.1 1060.3 487.6C1053.0 492.1 1053.9 491.0 1047.7 496.0C1041.6 501.1 1042.3 499.8 1037.2 506.5C1032.2 513.2 1033.3 513.4 1028.8 521.2C1024.3 529.1 1024.9 528.3 1020.4 535.9C1015.9 543.6 1014.2 546.3 1012.0 550.0" stroke-width="6.5"/><path d="M1150.0 456.1C1144.6 457.2 1140.7 458.1 1129.6 460.3C1118.6 462.6 1116.5 462.6 1108.6 464.5C1100.8 466.5 1102.5 466.8 1100.2 467.7" stroke-width="5.5"/><path d="M1129.6 430.9C1131.3 427.0 1134.8 423.5 1135.9 416.2C1137.1 408.9 1136.1 410.3 1133.8 403.6C1131.6 396.9 1129.8 397.7 1127.5 391.0C1125.3 384.3 1126.0 381.8 1125.4 378.4" stroke-width="5.0"/><path d="M1096.0 458.2C1099.4 456.0 1103.0 454.9 1108.6 449.8C1114.2 444.8 1113.7 443.8 1117.0 439.3C1120.4 434.8 1120.1 434.7 1121.2 433.0" stroke-width="1.3"/><path d="M1054.0 370.0C1050.7 372.8 1047.6 374.3 1041.4 380.5C1035.3 386.7 1035.4 386.4 1030.9 393.1C1026.4 399.8 1027.4 397.9 1024.6 405.7C1021.8 413.5 1023.2 414.1 1020.4 422.5C1017.6 430.9 1016.3 428.8 1014.1 437.2C1011.9 445.6 1013.1 445.6 1012.0 454.0C1010.9 462.4 1011.6 460.9 1009.9 468.7C1008.2 476.6 1007.9 475.6 1005.7 483.4C1003.5 491.3 1003.7 489.7 1001.5 498.1C999.3 506.5 999.5 506.5 997.3 514.9C995.1 523.3 995.3 520.3 993.1 529.6C990.9 539.0 990.0 544.6 988.9 550.0" stroke-width="6.0"/><path d="M1014.1 464.5C1017.5 461.7 1021.7 458.5 1026.7 454.0C1031.8 449.5 1027.4 449.7 1033.0 447.7C1038.6 445.8 1042.1 447.8 1047.7 446.7C1053.3 445.5 1052.3 444.4 1054.0 443.5" stroke-width="4.0"/><path d="M1047.7 446.7C1049.4 448.6 1050.4 450.9 1054.0 454.0C1057.7 457.1 1059.4 457.1 1061.4 458.2" stroke-width="3.5"/><path d="M1028.8 433.0C1029.4 436.4 1030.4 442.3 1030.9 445.6" stroke-width="3.5"/><path d="M997.3 514.9C994.5 512.7 992.4 511.6 986.8 506.5C981.2 501.5 977.4 502.7 976.3 496.0C975.2 489.3 978.1 488.0 982.6 481.3C987.1 474.6 988.1 476.4 993.1 470.8C998.1 465.2 999.3 463.1 1001.5 460.3" stroke-width="4.0"/><path d="M1005.7 498.1C1009.1 497.0 1011.0 496.2 1018.3 493.9C1025.6 491.7 1025.2 489.2 1033.0 489.7C1040.9 490.3 1043.8 494.3 1047.7 496.0" stroke-width="4.0"/><path d="M1104.4 370.0C1101.1 372.8 1097.4 374.9 1091.8 380.5C1086.2 386.1 1089.6 386.0 1083.4 391.0C1077.3 396.0 1074.9 393.8 1068.7 399.4C1062.6 405.0 1063.7 404.7 1060.3 412.0C1057.0 419.3 1058.9 419.4 1056.1 426.7C1053.3 434.0 1052.1 434.0 1049.8 439.3C1047.6 444.6 1048.3 444.7 1047.7 446.7" stroke-width="4.0"/><path d="M1091.8 373.2C1092.1 375.1 1092.6 378.5 1092.9 380.5" stroke-width="3.0"/><path d="M1079.2 487.6C1076.4 491.0 1073.2 492.9 1068.7 500.2C1064.2 507.5 1064.7 507.1 1062.4 514.9C1060.2 522.8 1060.3 520.3 1060.3 529.6C1060.3 539.0 1061.9 544.6 1062.4 550.0" stroke-width="4.0"/><path d="M1100.2 484.5C1098.0 487.0 1094.3 488.0 1091.8 493.9C1089.3 499.8 1090.8 499.8 1090.8 506.5C1090.8 513.2 1093.8 513.0 1091.8 519.1C1089.9 525.3 1086.8 521.4 1083.4 529.6C1080.1 537.9 1080.3 544.6 1079.2 550.0" stroke-width="3.0"/><path d="M1144.3 506.5C1142.7 509.3 1140.3 510.9 1138.0 517.0C1135.8 523.2 1135.9 522.9 1135.9 529.6C1135.9 536.4 1138.6 536.8 1138.0 542.2C1137.5 547.7 1135.0 547.9 1133.8 550.0" stroke-width="3.5"/><path d="M1119.1 535.9C1120.2 537.6 1122.8 538.5 1123.3 542.2C1123.9 546.0 1121.8 547.9 1121.2 550.0" stroke-width="3.5"/><path d="M1039.3 468.7C1036.5 471.5 1033.3 474.2 1028.8 479.2C1024.3 484.3 1024.2 485.4 1022.5 487.6" stroke-width="1.3"/><path d="M625.0 710.9C628.4 709.3 630.9 708.6 637.6 704.6C644.3 700.7 642.4 702.4 650.2 696.2C658.0 690.1 662.5 685.4 667.0 681.5" stroke-width="7.5"/><path d="M667.0 681.5C670.4 678.2 673.4 675.1 679.6 668.9C685.8 662.8 685.6 665.1 690.1 658.4C694.6 651.7 693.1 651.6 696.4 643.7C699.8 635.9 699.9 636.9 702.7 629.0C705.5 621.2 706.1 622.7 706.9 614.3C707.8 605.9 706.4 605.4 705.9 597.5C705.3 589.7 702.9 591.1 704.8 584.9C706.8 578.7 707.6 578.9 713.2 574.4C718.8 569.9 718.0 570.9 725.8 568.1C733.7 565.3 734.8 566.1 742.6 563.9C750.5 561.7 748.5 563.1 755.2 559.7C761.9 556.3 762.2 555.2 767.8 551.3C773.4 547.4 774.0 546.7 776.2 545.0" stroke-width="5.0"/><path d="M705.9 587.0C708.9 587.8 709.9 589.3 717.4 590.2C725.0 591.0 727.5 591.6 734.2 590.2C740.9 588.8 737.6 588.0 742.6 584.9C747.7 581.8 747.2 580.6 753.1 578.6C759.0 576.6 761.6 577.8 764.7 577.6" stroke-width="3.5"/><path d="M702.7 629.0C706.6 629.3 710.1 629.5 717.4 630.1C724.7 630.6 724.1 632.0 730.0 631.1C735.9 630.3 736.4 629.4 739.5 626.9C742.6 624.4 741.0 623.1 741.6 621.7" stroke-width="3.5"/><path d="M694.3 658.4C698.2 659.3 702.3 661.6 709.0 661.6C715.7 661.6 714.5 661.5 719.5 658.4C724.6 655.3 725.7 652.3 727.9 650.0" stroke-width="3.3"/><path d="M685.9 671.0C689.8 671.0 692.8 671.6 700.6 671.0C708.5 670.5 708.6 670.3 715.3 668.9C722.0 667.5 721.9 666.9 725.8 665.8C729.7 664.7 728.9 665.0 730.0 664.7" stroke-width="3.5"/><path d="M688.0 675.2C693.6 675.8 698.9 676.2 709.0 677.3C719.1 678.4 716.9 677.2 725.8 679.4C734.8 681.7 733.7 682.9 742.6 685.7C751.6 688.5 749.9 688.8 759.4 689.9C768.9 691.0 773.3 689.9 778.3 689.9" stroke-width="4.0"/><path d="M767.8 689.9C768.4 692.2 769.4 696.1 769.9 698.3" stroke-width="3.0"/><path d="M667.0 687.8C669.8 690.6 670.2 695.0 677.5 698.3C684.8 701.7 685.9 698.2 694.3 700.4C702.7 702.7 700.6 704.5 709.0 706.7C717.4 709.0 721.3 708.3 725.8 708.8" stroke-width="3.5"/><path d="M652.3 692.0C656.2 691.5 658.6 691.6 667.0 689.9C675.4 688.2 673.7 687.4 683.8 685.7C693.9 684.0 694.2 684.2 704.8 683.6C715.5 683.1 718.7 683.6 723.7 683.6" stroke-width="3.5"/><path d="M694.3 700.4C696.0 703.8 698.9 709.7 700.6 713.0" stroke-width="3.0"/><path d="M742.6 563.9C743.2 561.7 742.5 560.0 744.7 555.5C747.0 551.0 749.3 549.3 751.0 547.1" stroke-width="3.0"/><path d="M759.4 557.6C760.0 555.4 761.0 551.4 761.5 549.2" stroke-width="3.0"/><path d="M755.2 719.3C758.6 719.1 762.8 718.0 767.8 718.3C772.9 718.6 772.4 719.8 774.1 720.4" stroke-width="3.0"/><path d="M884.0 607.0C882.9 603.7 883.2 600.6 879.8 594.4C876.5 588.3 877.0 589.0 871.4 583.9C865.8 578.9 866.1 578.9 858.8 575.5C851.5 572.2 851.4 573.6 844.1 571.3C836.8 569.1 837.1 570.5 831.5 567.1C825.9 563.8 826.5 563.8 823.1 558.7C819.7 553.7 818.3 553.8 818.9 548.2C819.5 542.6 821.8 543.9 825.2 537.7C828.6 531.6 830.4 531.3 831.5 525.1C832.6 519.0 832.2 519.7 829.4 514.6C826.6 509.6 825.5 510.1 821.0 506.2C816.5 502.3 817.1 500.5 812.6 499.9C808.1 499.3 807.6 502.7 804.2 504.1C800.8 505.5 801.1 504.9 800.0 505.2" stroke-width="4.5"/><path d="M831.5 525.1C834.3 524.0 837.5 523.7 842.0 520.9C846.5 518.1 846.9 518.3 848.3 514.6C849.7 511.0 847.5 509.2 847.3 507.3" stroke-width="3.5"/><path d="M827.3 534.6C824.5 533.7 821.8 533.4 816.8 531.4C811.8 529.5 810.6 528.3 808.4 527.2" stroke-width="3.3"/><path d="M812.6 499.9C812.0 496.5 809.9 493.5 810.5 487.3C811.1 481.1 812.2 480.2 814.7 476.8C817.2 473.4 818.6 475.3 820.0 474.7" stroke-width="3.5"/><path d="M808.4 485.2C807.8 481.3 806.3 477.2 806.3 470.5C806.3 463.8 807.8 462.8 808.4 460.0" stroke-width="3.0"/><path d="M848.3 571.3C847.2 568.0 842.4 564.3 844.1 558.7C845.8 553.1 849.6 553.7 854.6 550.3C859.7 547.0 861.9 549.5 863.0 546.1C864.1 542.8 861.1 541.6 858.8 537.7C856.6 533.8 853.8 535.6 854.6 531.4C855.5 527.2 860.0 524.5 862.0 522.0" stroke-width="1.3"/><path d="M884.0 590.2C886.3 588.0 886.8 585.7 892.4 581.8C898.0 577.9 897.7 578.3 905.0 575.5C912.3 572.7 913.0 575.2 919.7 571.3C926.4 567.4 928.5 565.9 930.2 560.8C931.9 555.8 927.7 556.9 926.0 552.4C924.3 547.9 923.9 547.9 923.9 544.0C923.9 540.1 922.7 541.1 926.0 537.7C929.4 534.4 930.9 534.8 936.5 531.4C942.1 528.1 942.0 529.0 947.0 525.1C952.1 521.2 952.9 521.2 955.4 516.7C958.0 512.2 956.2 510.5 956.5 508.3" stroke-width="4.0"/><path d="M900.8 575.5C901.4 573.3 903.5 571.3 902.9 567.1C902.4 562.9 899.8 561.7 898.7 559.8" stroke-width="3.3"/><path d="M921.8 571.3C924.6 573.0 926.7 573.7 932.3 577.6C937.9 581.5 940.0 583.8 942.8 586.0" stroke-width="1.3"/><path d="M930.2 560.8C931.3 558.6 931.6 556.1 934.4 552.4C937.2 548.8 939.0 548.6 940.7 547.2" stroke-width="3.3"/><path d="M936.5 531.4C940.4 531.4 943.9 533.7 951.2 531.4C958.5 529.2 957.7 528.1 963.8 523.0C970.0 518.0 971.5 515.3 974.3 512.5" stroke-width="1.3"/><path d="M913.4 621.7C916.8 619.5 919.3 617.2 926.0 613.3C932.7 609.4 930.8 609.8 938.6 607.0C946.5 604.2 947.6 606.2 955.4 602.8C963.3 599.5 962.4 599.5 968.0 594.4C973.6 589.4 973.2 588.4 976.4 583.9C979.6 579.4 979.1 579.3 980.0 577.6" stroke-width="6.0"/><path d="M913.4 621.7C914.0 617.8 915.2 616.0 915.5 607.0C915.8 598.1 914.8 593.2 914.5 588.1" stroke-width="1.3"/><path d="M934.4 609.1C935.5 605.2 937.5 598.3 938.6 594.4" stroke-width="3.0"/><path d="M970.1 592.3C970.4 590.6 970.9 587.7 971.2 586.0" stroke-width="1.3"/><path d="M980.0 487.3C978.5 489.5 974.3 491.2 974.3 495.7C974.3 500.2 978.5 501.9 980.0 504.1" stroke-width="3.0"/><path d="M800.0 481.0C801.7 483.8 805.7 485.9 806.3 491.5C806.9 497.1 803.2 499.2 802.1 502.0" stroke-width="3.0"/><path d="M848.5 725.5C850.4 718.9 851.3 712.4 855.8 700.7C860.2 689.0 859.6 691.2 865.2 681.7C870.9 672.2 871.1 674.3 876.9 664.9C882.7 655.6 884.4 651.6 887.1 646.7" stroke-width="11.5"/><path d="M887.1 646.7C887.3 641.6 888.6 636.7 887.9 627.7C887.1 618.8 886.3 620.5 884.2 613.1C882.1 605.7 881.0 603.5 879.8 600.0" stroke-width="8.0"/><path d="M890.0 643.8C893.2 641.8 893.9 642.3 901.7 636.5C909.5 630.6 909.9 628.9 919.2 621.9C928.6 614.9 928.2 614.5 936.7 610.2C945.3 605.9 942.5 607.8 951.3 605.8C960.2 603.9 965.0 603.7 970.0 602.9" stroke-width="7.0"/><path d="M890.0 725.5C893.2 720.4 896.3 715.1 901.7 706.5C907.2 698.0 907.0 700.0 910.5 693.4C914.0 686.8 913.3 688.3 914.8 681.7C916.4 675.1 916.3 675.6 916.3 668.6C916.3 661.6 915.6 660.5 914.8 655.5C914.1 650.4 913.8 651.2 913.4 649.6" stroke-width="5.0"/><path d="M914.8 655.5C917.6 653.1 919.2 650.6 925.1 646.7C930.9 642.8 930.9 643.0 936.7 640.9C942.6 638.7 941.9 639.1 947.0 638.7C952.0 638.2 953.4 639.0 955.7 639.1" stroke-width="3.5"/><path d="M917.8 667.1C920.5 665.6 922.9 663.6 928.0 661.3C933.0 659.0 931.7 658.6 936.7 658.4C941.8 658.2 944.2 660.0 947.0 660.6" stroke-width="3.3"/><path d="M907.6 702.1C910.7 702.1 913.0 701.0 919.2 702.1C925.5 703.3 926.2 705.0 930.9 706.5C935.6 708.1 932.1 709.1 936.7 708.0C941.4 706.8 943.7 704.5 948.4 702.1C953.1 699.8 952.3 700.6 954.2 699.2C956.2 697.9 955.3 697.6 955.7 697.0" stroke-width="3.5"/><path d="M935.3 708.0C937.2 709.9 938.3 711.8 942.6 715.3C946.9 718.8 949.0 719.6 951.3 721.1" stroke-width="3.5"/><path d="M1110.6 728.1C1111.5 720.5 1112.2 714.1 1114.2 699.4C1116.1 684.8 1116.8 685.2 1117.8 673.1C1118.7 661.0 1117.8 659.1 1117.8 654.0" stroke-width="14.5"/><path d="M1117.8 654.0C1117.4 646.3 1118.1 637.4 1116.6 625.3C1115.0 613.1 1113.0 613.0 1111.8 608.5" stroke-width="10.5"/><path d="M1111.8 608.5C1109.5 602.8 1106.9 596.9 1103.4 587.0C1099.9 577.1 1101.5 578.1 1098.6 571.4C1095.7 564.7 1094.2 564.4 1092.6 561.9" stroke-width="6.5"/><path d="M1092.6 561.9C1090.1 559.0 1088.8 556.5 1083.1 551.1C1077.3 545.7 1076.2 547.3 1071.1 541.5C1066.0 535.8 1066.5 535.3 1063.9 529.6C1061.4 523.8 1062.2 522.6 1061.5 520.0" stroke-width="4.5"/><path d="M1118.9 620.5C1121.5 617.9 1123.4 616.7 1128.5 610.9C1133.6 605.2 1134.6 604.1 1138.1 598.9C1141.6 593.8 1140.7 593.7 1141.7 591.8" stroke-width="4.5"/><path d="M1140.5 579.8C1139.2 576.6 1137.0 571.0 1135.7 567.8" stroke-width="1.3"/><path d="M1102.2 572.6C1104.8 569.4 1106.0 565.8 1111.8 560.7C1117.5 555.6 1117.4 555.4 1123.7 553.5C1130.1 551.6 1131.2 556.0 1135.7 553.5C1140.2 550.9 1138.9 550.3 1140.5 543.9C1142.1 537.5 1142.3 535.9 1141.7 529.6C1141.0 523.2 1139.0 522.6 1138.1 520.0" stroke-width="5.5"/><path d="M1120.1 553.5C1120.5 550.9 1121.3 548.4 1121.3 543.9C1121.3 539.5 1120.5 538.7 1120.1 536.7" stroke-width="3.5"/><path d="M1083.1 551.1C1081.1 547.9 1077.2 544.9 1075.9 539.1C1074.6 533.4 1075.1 534.0 1078.3 529.6C1081.5 525.1 1085.3 524.3 1087.8 522.4" stroke-width="4.0"/><path d="M1063.9 543.9C1062.0 543.3 1058.7 542.2 1056.7 541.5" stroke-width="3.0"/><path d="M1104.6 701.8C1101.4 702.5 1098.4 702.3 1092.6 704.2C1086.9 706.1 1087.5 703.4 1083.1 709.0C1078.6 714.5 1077.8 720.7 1075.9 725.0" stroke-width="5.5"/><path d="M1138.1 725.0C1140.0 722.7 1142.1 719.2 1145.3 716.2C1148.5 713.2 1148.8 714.4 1150.0 713.8" stroke-width="3.0"/><path d="M800.0 360.0C802.7 357.9 804.7 355.7 810.0 352.0C815.3 348.3 814.1 348.1 820.0 346.0C825.9 343.9 826.1 344.8 832.0 344.0C837.9 343.2 839.3 343.3 842.0 343.0" stroke-width="3.5"/><path d="M800.0 366.0C803.2 365.5 805.1 364.3 812.0 364.0C818.9 363.7 819.1 363.9 826.0 365.0C832.9 366.1 833.2 365.1 838.0 368.0C842.8 370.9 841.9 369.6 844.0 376.0C846.1 382.4 845.2 386.7 846.0 392.0C846.8 397.3 846.7 394.9 847.0 396.0" stroke-width="3.5"/><path d="M838.0 368.0C842.8 368.5 848.5 370.3 856.0 370.0C863.5 369.7 860.9 368.3 866.0 367.0C871.1 365.7 872.6 365.5 875.0 365.0" stroke-width="3.5"/><path d="M846.0 376.0C848.7 376.3 853.3 376.7 856.0 377.0" stroke-width="3.0"/><path d="M800.0 414.0C801.6 410.8 801.7 407.3 806.0 402.0C810.3 396.7 811.2 397.2 816.0 394.0C820.8 390.8 821.9 391.1 824.0 390.0" stroke-width="3.5"/><path d="M800.0 452.0C801.6 455.2 803.9 456.5 806.0 464.0C808.1 471.5 806.4 472.5 808.0 480.0C809.6 487.5 810.4 486.7 812.0 492.0C813.6 497.3 813.5 497.9 814.0 500.0" stroke-width="3.5"/><path d="M808.0 480.0C810.1 478.9 812.8 477.6 816.0 476.0C819.2 474.4 818.9 474.5 820.0 474.0" stroke-width="3.0"/><path d="M906.0 340.0C909.7 341.1 910.9 343.5 920.0 344.0C929.1 344.5 929.9 343.1 940.0 342.0C950.1 340.9 953.2 340.5 958.0 340.0" stroke-width="3.0"/><path d="M984.0 340.0C988.3 342.7 992.5 344.7 1000.0 350.0C1007.5 355.3 1005.6 353.6 1012.0 360.0C1018.4 366.4 1020.8 370.3 1024.0 374.0" stroke-width="3.0"/><path d="M974.0 500.0C975.6 496.3 975.2 492.4 980.0 486.0C984.8 479.6 986.1 481.9 992.0 476.0C997.9 470.1 998.8 468.5 1002.0 464.0C1005.2 459.5 1003.5 460.3 1004.0 459.0" stroke-width="3.5"/><path d="M988.9 550.0C988.5 552.7 988.3 554.9 987.6 560.2C986.9 565.5 988.2 564.2 986.2 570.0C984.2 575.8 981.7 578.7 980.0 581.9" stroke-width="7.5"/><path d="M1012.0 550.0C1009.6 551.2 1008.4 551.5 1003.0 554.6C997.6 557.7 995.7 558.6 991.8 561.6C987.9 564.6 989.2 564.7 988.3 565.8" stroke-width="5.5"/><path d="M1038.0 500.0C1035.8 504.5 1034.8 507.5 1029.6 516.8C1024.4 526.1 1027.4 525.7 1018.4 535.0C1009.4 544.3 1002.0 547.3 996.0 551.8" stroke-width="1.3"/><path d="M954.0 508.4C954.4 511.0 956.9 513.7 955.4 518.2C953.9 522.7 952.5 521.8 948.4 525.2C944.3 528.6 942.2 529.3 940.0 530.8" stroke-width="3.0"/><path d="M975.0 512.6C972.4 514.1 969.7 514.1 965.2 518.2C960.7 522.3 962.7 523.5 958.2 528.0C953.7 532.5 953.3 532.8 948.4 535.0C943.5 537.2 942.2 536.0 940.0 536.4" stroke-width="1.3"/><path d="M972.2 500.0C974.8 502.6 976.4 504.9 982.0 509.8C987.6 514.7 990.2 516.0 993.2 518.2" stroke-width="3.5"/><path d="M1071.6 500.0C1069.4 503.7 1065.8 506.5 1063.2 514.0C1060.6 521.5 1061.8 520.9 1061.8 528.0C1061.8 535.1 1060.6 535.0 1063.2 540.6C1065.8 546.2 1067.1 545.3 1071.6 549.0C1076.1 552.7 1077.8 553.1 1080.0 554.6" stroke-width="4.0"/></g>
<g fill="none" stroke="#648174" stroke-linecap="round" stroke-linejoin="round"><path d="M880.0 256.5C875.7 257.3 872.6 257.7 863.8 259.7C855.0 261.6 856.0 261.6 847.0 263.9C838.1 266.1 838.1 265.3 830.2 268.1C822.4 270.9 824.3 270.7 817.6 274.4C810.9 278.0 811.7 277.5 805.0 281.7C798.3 285.9 798.6 285.1 792.4 290.1C786.3 295.2 787.0 294.5 781.9 300.6C776.9 306.8 776.9 306.5 773.5 313.2C770.2 319.9 772.7 320.2 769.3 325.8C766.0 331.4 766.0 329.2 760.9 334.2C755.9 339.3 754.9 339.1 750.4 344.7C745.9 350.3 746.9 348.5 744.1 355.2C741.3 361.9 742.1 362.1 739.9 369.9C737.7 377.8 738.5 375.3 735.7 384.6C732.9 394.0 731.1 399.6 729.4 405.0" stroke-width="4.3"/><path d="M830.2 267.0C832.5 263.1 834.1 260.1 838.6 252.3C843.1 244.5 843.7 243.2 847.0 237.6C850.4 232.0 850.1 233.0 851.2 231.3" stroke-width="1.8"/><path d="M847.0 256.5C850.4 253.7 850.8 251.0 859.6 246.0C868.4 241.0 874.6 239.8 880.0 237.6" stroke-width="1.8"/><path d="M834.4 252.3C837.8 250.1 840.3 248.9 847.0 243.9C853.7 238.9 856.3 236.2 859.6 233.4" stroke-width="1.3"/><path d="M700.0 232.4C705.6 234.9 709.8 238.2 721.0 241.8C732.2 245.4 730.8 245.7 742.0 246.0C753.2 246.3 751.8 245.1 763.0 242.9C774.2 240.6 774.5 239.6 784.0 237.6C793.5 235.6 794.8 236.1 798.7 235.5" stroke-width="1.3"/><path d="M721.0 241.8C721.6 239.6 722.0 236.2 723.1 233.4C724.2 230.6 724.6 231.9 725.2 231.3" stroke-width="0.3"/><path d="M790.3 288.0C792.0 284.1 794.4 280.0 796.6 273.3C798.9 266.6 798.2 265.6 798.7 262.8" stroke-width="0.8"/><path d="M805.0 285.9C808.4 285.4 812.0 283.8 817.6 283.8C823.2 283.8 823.8 285.4 826.0 285.9" stroke-width="0.8"/><path d="M813.4 285.9C813.7 286.8 814.2 288.2 814.5 289.1" stroke-width="0.3"/><path d="M771.4 323.7C775.9 323.2 778.1 323.3 788.2 321.6C798.3 319.9 798.0 320.2 809.2 317.4C820.4 314.6 820.1 313.4 830.2 311.1C840.3 308.9 838.1 310.1 847.0 309.0C856.0 307.9 855.0 308.3 863.8 306.9C872.6 305.5 875.7 304.6 880.0 303.8" stroke-width="2.3"/><path d="M773.5 327.9C779.1 327.4 782.8 327.8 794.5 325.8C806.3 323.9 806.4 322.8 817.6 320.6C828.8 318.3 825.3 318.0 836.5 317.4C847.7 316.9 848.0 316.8 859.6 318.5C871.2 320.1 874.6 322.3 880.0 323.7" stroke-width="1.3"/><path d="M769.3 332.1C772.4 334.1 777.8 337.5 780.9 339.5" stroke-width="0.8"/><path d="M750.4 344.7C749.6 341.9 748.7 339.8 747.3 334.2C745.9 328.6 744.9 330.4 745.2 323.7C745.4 317.0 747.2 316.9 748.3 309.0C749.4 301.2 747.1 300.5 749.4 294.3C751.6 288.2 751.9 290.4 756.7 285.9C761.5 281.4 762.7 282.3 767.2 277.5C771.7 272.7 771.8 270.6 773.5 268.1" stroke-width="1.3"/><path d="M745.2 330.0C742.6 327.8 740.5 327.2 735.7 321.6C730.9 316.0 730.7 314.9 727.3 309.0C723.9 303.1 724.2 302.1 723.1 299.6" stroke-width="0.3"/><path d="M742.0 380.4C746.5 378.7 750.4 377.5 758.8 374.1C767.2 370.8 765.7 370.6 773.5 367.8C781.4 365.0 780.4 365.3 788.2 363.6C796.1 361.9 796.2 363.8 802.9 361.5C809.6 359.3 808.4 359.1 813.4 355.2C818.5 351.3 816.2 349.3 821.8 346.8C827.4 344.3 829.4 346.6 834.4 345.8C839.5 344.9 839.0 344.2 840.7 343.7" stroke-width="1.3"/><path d="M802.9 362.6C806.8 363.4 809.8 363.8 817.6 365.7C825.5 367.7 825.0 367.4 832.3 369.9C839.6 372.4 838.5 373.5 844.9 375.2C851.4 376.9 853.4 375.9 856.5 376.2" stroke-width="0.8"/><path d="M832.3 369.9C833.4 367.1 834.8 362.8 836.5 359.4C838.2 356.1 838.1 357.9 838.6 357.3" stroke-width="0.3"/><path d="M844.9 375.2C844.9 378.3 844.6 382.0 844.9 386.7C845.2 391.5 845.7 391.4 846.0 393.0" stroke-width="0.3"/><path d="M856.5 372.0C861.2 370.1 869.6 366.6 874.3 364.7" stroke-width="0.3"/><path d="M769.3 369.9C770.4 366.0 771.3 361.4 773.5 355.2C775.8 349.1 776.6 349.1 777.7 346.8" stroke-width="0.3"/><path d="M786.1 362.6C786.7 360.1 786.8 357.0 788.2 353.1C789.6 349.2 790.5 349.3 791.4 347.9" stroke-width="0.3"/><path d="M758.8 376.2C762.7 376.8 764.0 377.2 773.5 378.3C783.0 379.4 785.0 378.7 794.5 380.4C804.0 382.1 805.3 383.5 809.2 384.6" stroke-width="0.8"/><path d="M756.7 405.0C757.8 401.3 759.2 396.4 760.9 390.9C762.6 385.5 762.5 386.3 763.0 384.6" stroke-width="0.8"/><path d="M805.0 405.0C807.3 402.4 808.4 399.2 813.4 395.1C818.5 391.1 821.1 391.3 823.9 389.9" stroke-width="0.8"/><path d="M771.4 405.0C771.1 402.9 770.6 399.3 770.4 397.2" stroke-width="0.3"/><path d="M870.0 261.2C873.4 259.8 875.3 259.8 882.6 255.9C889.9 252.0 889.5 251.2 897.3 246.5C905.1 241.7 903.6 239.3 912.0 238.1C920.4 236.8 919.8 239.1 928.8 241.6C937.8 244.1 936.1 245.1 945.6 247.5C955.1 249.9 954.4 249.5 964.5 250.7C974.6 251.8 973.9 252.3 983.4 251.7C992.9 251.2 991.3 251.1 1000.2 248.6C1009.2 246.0 1008.1 246.5 1017.0 242.3C1026.0 238.1 1025.0 238.1 1033.8 232.8C1042.6 227.5 1045.7 225.1 1050.0 222.3" stroke-width="2.8"/><path d="M864.1 241.0C867.8 239.9 869.5 238.6 878.0 237.0C886.5 235.4 886.7 234.9 896.0 234.9C905.4 234.9 908.5 236.4 913.1 237.0" stroke-width="1.3"/><path d="M878.0 271.7C882.5 270.2 887.8 267.8 895.0 266.0C902.2 264.2 900.8 264.2 905.1 264.9C909.3 265.7 909.4 267.9 911.0 268.9" stroke-width="0.8"/><path d="M962.4 247.5C962.7 245.8 963.2 242.9 963.5 241.2" stroke-width="0.3"/><path d="M933.0 240.2C934.1 239.6 936.1 238.6 937.2 238.1" stroke-width="0.3"/><path d="M964.5 255.9C965.6 257.6 967.6 260.5 968.7 262.2" stroke-width="0.3"/><path d="M991.8 253.8C992.4 254.9 993.4 256.9 993.9 258.0" stroke-width="0.3"/><path d="M1017.0 244.4C1021.5 244.9 1025.0 244.5 1033.8 246.5C1042.6 248.4 1045.7 250.3 1050.0 251.7" stroke-width="0.8"/><path d="M1025.4 242.3C1032.0 238.1 1043.5 230.7 1050.0 226.5" stroke-width="0.8"/><path d="M949.8 199.2C952.1 201.4 955.1 201.4 958.2 207.6C961.3 213.8 960.5 218.4 961.4 222.3" stroke-width="0.3"/><path d="M870.0 308.4C874.5 307.3 877.3 307.6 886.8 304.2C896.3 300.9 896.7 300.3 905.7 295.8C914.7 291.3 912.0 290.2 920.4 287.4C928.8 284.6 927.7 286.2 937.2 285.3C946.7 284.5 947.7 282.0 956.1 284.3C964.5 286.5 961.4 287.8 968.7 293.7C976.0 299.6 976.1 300.2 983.4 306.3C990.7 312.5 988.2 312.3 996.0 316.8C1003.9 321.3 1003.9 319.8 1012.8 323.1C1021.8 326.5 1022.3 325.5 1029.6 329.4C1036.9 333.3 1035.7 333.6 1040.1 337.8C1044.6 342.0 1044.8 343.2 1046.4 345.2" stroke-width="1.3"/><path d="M880.5 312.6C885.0 311.5 888.9 310.1 897.3 308.4C905.7 306.7 904.2 308.6 912.0 306.3C919.8 304.1 921.1 302.3 926.7 300.0C932.3 297.8 931.3 298.5 933.0 297.9" stroke-width="0.8"/><path d="M926.7 306.3C929.0 307.4 932.9 309.4 935.1 310.5" stroke-width="0.3"/><path d="M870.0 321.0C873.4 321.6 875.9 319.8 882.6 323.1C889.3 326.5 887.4 329.1 895.2 333.6C903.0 338.1 901.9 338.2 912.0 339.9C922.1 341.6 921.8 341.0 933.0 339.9C944.2 338.8 942.8 337.1 954.0 335.7C965.2 334.3 964.9 333.6 975.0 334.7C985.1 335.8 984.0 335.7 991.8 339.9C999.7 344.1 998.3 344.3 1004.4 350.4C1010.6 356.6 1009.9 356.5 1014.9 363.0C1020.0 369.6 1021.1 371.8 1023.3 375.0" stroke-width="1.8"/><path d="M899.4 327.3C901.1 328.4 900.7 329.3 905.7 331.5C910.7 333.8 914.9 334.6 918.3 335.7" stroke-width="0.3"/><path d="M1067.2 224.4C1066.9 227.8 1066.4 229.2 1066.2 237.0C1065.9 244.8 1065.9 244.8 1066.2 253.8C1066.4 262.8 1065.3 261.7 1067.2 270.6C1069.2 279.6 1070.2 278.5 1073.5 287.4C1076.9 296.4 1077.0 295.3 1079.8 304.2C1082.6 313.2 1083.5 312.6 1084.0 321.0C1084.6 329.4 1084.7 328.4 1081.9 335.7C1079.1 343.0 1078.6 342.2 1073.5 348.3C1068.5 354.5 1068.6 351.7 1063.0 358.8C1057.4 365.9 1055.3 370.7 1052.5 375.0" stroke-width="3.3"/><path d="M1000.0 247.5C1003.4 246.1 1004.8 245.6 1012.6 242.3C1020.4 238.9 1020.4 239.1 1029.4 234.9C1038.4 230.7 1037.2 230.4 1046.2 226.5C1055.2 222.6 1052.9 223.0 1063.0 220.2C1073.1 217.4 1074.5 217.7 1084.0 216.0C1093.5 214.3 1090.9 216.4 1098.7 213.9C1106.6 211.4 1106.1 209.9 1113.4 206.6C1120.7 203.2 1116.3 202.7 1126.0 201.3C1135.8 199.9 1143.6 201.3 1150.0 201.3" stroke-width="2.3"/><path d="M1052.5 221.3C1054.2 218.2 1054.3 215.0 1058.8 209.7C1063.3 204.4 1066.5 203.5 1069.3 201.3" stroke-width="0.8"/><path d="M1046.2 224.4C1046.8 223.3 1047.7 221.3 1048.3 220.2" stroke-width="0.3"/><path d="M1098.7 213.9C1100.4 216.7 1102.2 219.9 1105.0 224.4C1107.8 228.9 1108.1 229.0 1109.2 230.7" stroke-width="0.8"/><path d="M1098.7 220.2C1102.6 218.8 1106.1 216.6 1113.4 215.0C1120.7 213.3 1116.3 213.1 1126.0 213.9C1135.8 214.7 1143.6 217.0 1150.0 218.1" stroke-width="0.8"/><path d="M1121.8 207.6C1125.2 209.6 1126.9 212.7 1134.4 215.0C1141.9 217.2 1145.8 215.7 1150.0 216.0" stroke-width="0.3"/><path d="M1014.7 242.3C1020.9 243.1 1024.9 243.4 1037.8 245.4C1050.7 247.4 1050.7 247.9 1063.0 249.6C1075.3 251.3 1073.9 251.7 1084.0 251.7C1094.1 251.7 1091.9 251.6 1100.8 249.6C1109.8 247.7 1113.1 245.8 1117.6 244.4" stroke-width="1.8"/><path d="M1071.4 253.8C1074.8 256.3 1080.7 260.7 1084.0 263.3" stroke-width="0.3"/><path d="M1000.0 316.8C1003.4 317.4 1005.9 316.7 1012.6 318.9C1019.3 321.2 1019.0 321.3 1025.2 325.2C1031.4 329.1 1030.1 328.3 1035.7 333.6C1041.3 338.9 1043.4 342.1 1046.2 345.2" stroke-width="0.8"/><path d="M1000.0 321.0C1003.9 322.7 1006.9 325.1 1014.7 327.3C1022.5 329.6 1025.5 328.9 1029.4 329.4" stroke-width="0.3"/><path d="M1058.8 310.5C1060.5 314.4 1061.8 317.9 1065.1 325.2C1068.5 332.5 1069.7 334.5 1071.4 337.8" stroke-width="0.8"/><path d="M1081.9 342.0C1084.7 339.2 1088.2 336.0 1092.4 331.5C1096.6 327.0 1096.3 326.9 1097.7 325.2" stroke-width="0.8"/><path d="M1084.0 345.2C1086.8 345.2 1089.2 344.6 1094.5 345.2C1099.8 345.7 1101.4 346.7 1104.0 347.3" stroke-width="0.8"/><path d="M1000.0 350.4C1002.2 353.2 1003.9 355.9 1008.4 360.9C1012.9 366.0 1013.4 365.6 1016.8 369.3C1020.2 373.1 1019.9 373.5 1021.0 375.0" stroke-width="0.8"/><path d="M1055.7 351.5C1056.5 354.0 1058.0 358.4 1058.8 360.9" stroke-width="0.3"/><path d="M1090.3 375.0C1092.6 373.5 1093.7 371.4 1098.7 369.3C1103.8 367.3 1106.4 367.8 1109.2 367.2" stroke-width="0.8"/><path d="M730.0 401.8C728.3 403.5 729.3 403.6 723.7 408.1C718.1 412.6 717.4 414.4 709.0 418.6C700.6 422.8 702.3 422.2 692.2 423.9C682.1 425.5 682.4 425.7 671.2 424.9C660.0 424.1 659.2 421.3 650.2 420.7C641.2 420.1 644.3 421.4 637.6 422.8C630.9 424.2 628.4 425.1 625.0 426.0" stroke-width="2.6"/><path d="M650.2 418.6C649.6 416.4 647.0 414.1 648.1 410.2C649.2 406.3 652.7 405.6 654.4 403.9" stroke-width="0.8"/><path d="M673.3 419.7C673.9 418.5 674.8 416.6 675.4 415.5" stroke-width="0.3"/><path d="M694.3 412.3C692.1 410.6 688.2 407.7 685.9 406.0" stroke-width="0.3"/><path d="M696.4 416.5C697.0 414.8 698.0 411.9 698.5 410.2" stroke-width="0.3"/><path d="M723.7 408.1C728.8 404.2 733.1 399.6 742.6 393.4C752.1 387.2 754.9 387.2 759.4 385.0" stroke-width="1.3"/><path d="M759.4 389.2C760.0 393.7 762.6 397.0 761.5 406.0C760.4 415.0 759.1 414.4 755.2 422.8C751.3 431.2 750.2 429.1 746.8 437.5C743.5 445.9 742.1 445.9 742.6 454.3C743.2 462.7 745.6 461.2 748.9 469.0C752.3 476.9 753.3 475.3 755.2 483.7C757.2 492.1 755.2 491.0 756.3 500.5C757.4 510.0 758.0 509.9 759.4 519.4C760.8 528.9 762.1 527.3 761.5 536.2C761.0 545.2 760.1 545.4 757.3 553.0C754.5 560.7 752.7 561.8 751.0 565.0" stroke-width="2.8"/><path d="M711.1 420.7C712.8 422.9 714.1 424.1 717.4 429.1C720.8 434.1 718.7 434.6 723.7 439.6C728.8 444.7 731.3 444.1 736.3 448.0C741.4 451.9 740.9 452.6 742.6 454.3" stroke-width="1.8"/><path d="M736.3 416.5C738.0 418.7 739.5 420.4 742.6 424.9C745.7 429.4 746.5 431.1 747.9 433.3" stroke-width="0.3"/><path d="M758.4 448.0C758.7 451.9 758.6 457.1 759.4 462.7C760.3 468.3 761.0 467.3 761.5 469.0" stroke-width="0.3"/><path d="M769.9 397.6C771.6 401.5 775.7 404.5 776.2 412.3C776.8 420.1 772.0 418.6 772.0 427.0C772.0 435.4 771.7 437.1 776.2 443.8C780.7 450.5 782.7 447.2 788.8 452.2C795.0 457.3 796.0 456.0 799.3 462.7C802.7 469.4 799.9 470.1 801.4 477.4C802.9 484.7 804.1 486.7 805.0 490.0" stroke-width="2.3"/><path d="M793.0 414.4C793.6 417.8 793.5 420.3 795.1 427.0C796.8 433.7 796.7 434.6 799.3 439.6C802.0 444.7 803.5 444.2 805.0 445.9" stroke-width="0.8"/><path d="M780.4 494.2C783.8 495.3 787.4 496.7 793.0 498.4C798.6 500.1 799.2 500.0 801.4 500.5" stroke-width="0.8"/><path d="M625.0 456.4C628.4 456.1 630.3 455.9 637.6 455.4C644.9 454.8 645.6 454.3 652.3 454.3C659.0 454.3 660.0 455.1 662.8 455.4" stroke-width="0.8"/><path d="M625.0 466.9C627.8 466.4 629.9 467.1 635.5 464.8C641.1 462.6 643.2 460.2 646.0 458.5" stroke-width="0.8"/><path d="M652.3 427.0C649.5 430.4 647.4 433.4 641.8 439.6C636.2 445.8 635.8 446.2 631.3 450.1C626.8 454.0 626.7 453.2 625.0 454.3" stroke-width="0.8"/><path d="M742.6 565.0C744.9 562.9 744.3 561.5 751.0 557.2C757.7 552.9 760.0 554.4 767.8 548.8C775.7 543.2 775.9 540.7 780.4 536.2C784.9 531.7 783.5 533.1 784.6 532.0" stroke-width="0.8"/><path d="M780.4 536.2C780.7 533.4 781.2 528.5 781.5 525.7" stroke-width="0.3"/><path d="M772.0 561.4C774.3 560.9 778.2 559.9 780.4 559.3" stroke-width="0.3"/><path d="M1150.0 426.7C1146.8 428.4 1143.5 429.1 1138.0 433.0C1132.6 436.9 1134.1 436.4 1129.6 441.4C1125.1 446.5 1126.8 446.9 1121.2 451.9C1115.6 457.0 1114.2 456.4 1108.6 460.3C1103.0 464.2 1105.8 463.3 1100.2 466.6C1094.6 470.0 1094.3 469.6 1087.6 472.9C1080.9 476.3 1082.3 475.3 1075.0 479.2C1067.7 483.1 1067.6 483.1 1060.3 487.6C1053.0 492.1 1053.9 491.0 1047.7 496.0C1041.6 501.1 1042.3 499.8 1037.2 506.5C1032.2 513.2 1033.3 513.4 1028.8 521.2C1024.3 529.1 1024.9 528.3 1020.4 535.9C1015.9 543.6 1014.2 546.3 1012.0 550.0" stroke-width="3.8"/><path d="M1150.0 456.1C1144.6 457.2 1140.7 458.1 1129.6 460.3C1118.6 462.6 1116.5 462.6 1108.6 464.5C1100.8 466.5 1102.5 466.8 1100.2 467.7" stroke-width="2.8"/><path d="M1129.6 430.9C1131.3 427.0 1134.8 423.5 1135.9 416.2C1137.1 408.9 1136.1 410.3 1133.8 403.6C1131.6 396.9 1129.8 397.7 1127.5 391.0C1125.3 384.3 1126.0 381.8 1125.4 378.4" stroke-width="2.3"/><path d="M1054.0 370.0C1050.7 372.8 1047.6 374.3 1041.4 380.5C1035.3 386.7 1035.4 386.4 1030.9 393.1C1026.4 399.8 1027.4 397.9 1024.6 405.7C1021.8 413.5 1023.2 414.1 1020.4 422.5C1017.6 430.9 1016.3 428.8 1014.1 437.2C1011.9 445.6 1013.1 445.6 1012.0 454.0C1010.9 462.4 1011.6 460.9 1009.9 468.7C1008.2 476.6 1007.9 475.6 1005.7 483.4C1003.5 491.3 1003.7 489.7 1001.5 498.1C999.3 506.5 999.5 506.5 997.3 514.9C995.1 523.3 995.3 520.3 993.1 529.6C990.9 539.0 990.0 544.6 988.9 550.0" stroke-width="3.3"/><path d="M1014.1 464.5C1017.5 461.7 1021.7 458.5 1026.7 454.0C1031.8 449.5 1027.4 449.7 1033.0 447.7C1038.6 445.8 1042.1 447.8 1047.7 446.7C1053.3 445.5 1052.3 444.4 1054.0 443.5" stroke-width="1.3"/><path d="M1047.7 446.7C1049.4 448.6 1050.4 450.9 1054.0 454.0C1057.7 457.1 1059.4 457.1 1061.4 458.2" stroke-width="0.8"/><path d="M1028.8 433.0C1029.4 436.4 1030.4 442.3 1030.9 445.6" stroke-width="0.8"/><path d="M997.3 514.9C994.5 512.7 992.4 511.6 986.8 506.5C981.2 501.5 977.4 502.7 976.3 496.0C975.2 489.3 978.1 488.0 982.6 481.3C987.1 474.6 988.1 476.4 993.1 470.8C998.1 465.2 999.3 463.1 1001.5 460.3" stroke-width="1.3"/><path d="M1005.7 498.1C1009.1 497.0 1011.0 496.2 1018.3 493.9C1025.6 491.7 1025.2 489.2 1033.0 489.7C1040.9 490.3 1043.8 494.3 1047.7 496.0" stroke-width="1.3"/><path d="M1104.4 370.0C1101.1 372.8 1097.4 374.9 1091.8 380.5C1086.2 386.1 1089.6 386.0 1083.4 391.0C1077.3 396.0 1074.9 393.8 1068.7 399.4C1062.6 405.0 1063.7 404.7 1060.3 412.0C1057.0 419.3 1058.9 419.4 1056.1 426.7C1053.3 434.0 1052.1 434.0 1049.8 439.3C1047.6 444.6 1048.3 444.7 1047.7 446.7" stroke-width="1.3"/><path d="M1091.8 373.2C1092.1 375.1 1092.6 378.5 1092.9 380.5" stroke-width="0.3"/><path d="M1079.2 487.6C1076.4 491.0 1073.2 492.9 1068.7 500.2C1064.2 507.5 1064.7 507.1 1062.4 514.9C1060.2 522.8 1060.3 520.3 1060.3 529.6C1060.3 539.0 1061.9 544.6 1062.4 550.0" stroke-width="1.3"/><path d="M1100.2 484.5C1098.0 487.0 1094.3 488.0 1091.8 493.9C1089.3 499.8 1090.8 499.8 1090.8 506.5C1090.8 513.2 1093.8 513.0 1091.8 519.1C1089.9 525.3 1086.8 521.4 1083.4 529.6C1080.1 537.9 1080.3 544.6 1079.2 550.0" stroke-width="0.3"/><path d="M1144.3 506.5C1142.7 509.3 1140.3 510.9 1138.0 517.0C1135.8 523.2 1135.9 522.9 1135.9 529.6C1135.9 536.4 1138.6 536.8 1138.0 542.2C1137.5 547.7 1135.0 547.9 1133.8 550.0" stroke-width="0.8"/><path d="M1119.1 535.9C1120.2 537.6 1122.8 538.5 1123.3 542.2C1123.9 546.0 1121.8 547.9 1121.2 550.0" stroke-width="0.8"/><path d="M625.0 710.9C628.4 709.3 630.9 708.6 637.6 704.6C644.3 700.7 642.4 702.4 650.2 696.2C658.0 690.1 662.5 685.4 667.0 681.5" stroke-width="4.8"/><path d="M667.0 681.5C670.4 678.2 673.4 675.1 679.6 668.9C685.8 662.8 685.6 665.1 690.1 658.4C694.6 651.7 693.1 651.6 696.4 643.7C699.8 635.9 699.9 636.9 702.7 629.0C705.5 621.2 706.1 622.7 706.9 614.3C707.8 605.9 706.4 605.4 705.9 597.5C705.3 589.7 702.9 591.1 704.8 584.9C706.8 578.7 707.6 578.9 713.2 574.4C718.8 569.9 718.0 570.9 725.8 568.1C733.7 565.3 734.8 566.1 742.6 563.9C750.5 561.7 748.5 563.1 755.2 559.7C761.9 556.3 762.2 555.2 767.8 551.3C773.4 547.4 774.0 546.7 776.2 545.0" stroke-width="2.3"/><path d="M705.9 587.0C708.9 587.8 709.9 589.3 717.4 590.2C725.0 591.0 727.5 591.6 734.2 590.2C740.9 588.8 737.6 588.0 742.6 584.9C747.7 581.8 747.2 580.6 753.1 578.6C759.0 576.6 761.6 577.8 764.7 577.6" stroke-width="0.8"/><path d="M702.7 629.0C706.6 629.3 710.1 629.5 717.4 630.1C724.7 630.6 724.1 632.0 730.0 631.1C735.9 630.3 736.4 629.4 739.5 626.9C742.6 624.4 741.0 623.1 741.6 621.7" stroke-width="0.8"/><path d="M694.3 658.4C698.2 659.3 702.3 661.6 709.0 661.6C715.7 661.6 714.5 661.5 719.5 658.4C724.6 655.3 725.7 652.3 727.9 650.0" stroke-width="0.6"/><path d="M685.9 671.0C689.8 671.0 692.8 671.6 700.6 671.0C708.5 670.5 708.6 670.3 715.3 668.9C722.0 667.5 721.9 666.9 725.8 665.8C729.7 664.7 728.9 665.0 730.0 664.7" stroke-width="0.8"/><path d="M688.0 675.2C693.6 675.8 698.9 676.2 709.0 677.3C719.1 678.4 716.9 677.2 725.8 679.4C734.8 681.7 733.7 682.9 742.6 685.7C751.6 688.5 749.9 688.8 759.4 689.9C768.9 691.0 773.3 689.9 778.3 689.9" stroke-width="1.3"/><path d="M767.8 689.9C768.4 692.2 769.4 696.1 769.9 698.3" stroke-width="0.3"/><path d="M667.0 687.8C669.8 690.6 670.2 695.0 677.5 698.3C684.8 701.7 685.9 698.2 694.3 700.4C702.7 702.7 700.6 704.5 709.0 706.7C717.4 709.0 721.3 708.3 725.8 708.8" stroke-width="0.8"/><path d="M652.3 692.0C656.2 691.5 658.6 691.6 667.0 689.9C675.4 688.2 673.7 687.4 683.8 685.7C693.9 684.0 694.2 684.2 704.8 683.6C715.5 683.1 718.7 683.6 723.7 683.6" stroke-width="0.8"/><path d="M694.3 700.4C696.0 703.8 698.9 709.7 700.6 713.0" stroke-width="0.3"/><path d="M742.6 563.9C743.2 561.7 742.5 560.0 744.7 555.5C747.0 551.0 749.3 549.3 751.0 547.1" stroke-width="0.3"/><path d="M759.4 557.6C760.0 555.4 761.0 551.4 761.5 549.2" stroke-width="0.3"/><path d="M755.2 719.3C758.6 719.1 762.8 718.0 767.8 718.3C772.9 718.6 772.4 719.8 774.1 720.4" stroke-width="0.3"/><path d="M884.0 607.0C882.9 603.7 883.2 600.6 879.8 594.4C876.5 588.3 877.0 589.0 871.4 583.9C865.8 578.9 866.1 578.9 858.8 575.5C851.5 572.2 851.4 573.6 844.1 571.3C836.8 569.1 837.1 570.5 831.5 567.1C825.9 563.8 826.5 563.8 823.1 558.7C819.7 553.7 818.3 553.8 818.9 548.2C819.5 542.6 821.8 543.9 825.2 537.7C828.6 531.6 830.4 531.3 831.5 525.1C832.6 519.0 832.2 519.7 829.4 514.6C826.6 509.6 825.5 510.1 821.0 506.2C816.5 502.3 817.1 500.5 812.6 499.9C808.1 499.3 807.6 502.7 804.2 504.1C800.8 505.5 801.1 504.9 800.0 505.2" stroke-width="1.8"/><path d="M831.5 525.1C834.3 524.0 837.5 523.7 842.0 520.9C846.5 518.1 846.9 518.3 848.3 514.6C849.7 511.0 847.5 509.2 847.3 507.3" stroke-width="0.8"/><path d="M827.3 534.6C824.5 533.7 821.8 533.4 816.8 531.4C811.8 529.5 810.6 528.3 808.4 527.2" stroke-width="0.6"/><path d="M812.6 499.9C812.0 496.5 809.9 493.5 810.5 487.3C811.1 481.1 812.2 480.2 814.7 476.8C817.2 473.4 818.6 475.3 820.0 474.7" stroke-width="0.8"/><path d="M808.4 485.2C807.8 481.3 806.3 477.2 806.3 470.5C806.3 463.8 807.8 462.8 808.4 460.0" stroke-width="0.3"/><path d="M884.0 590.2C886.3 588.0 886.8 585.7 892.4 581.8C898.0 577.9 897.7 578.3 905.0 575.5C912.3 572.7 913.0 575.2 919.7 571.3C926.4 567.4 928.5 565.9 930.2 560.8C931.9 555.8 927.7 556.9 926.0 552.4C924.3 547.9 923.9 547.9 923.9 544.0C923.9 540.1 922.7 541.1 926.0 537.7C929.4 534.4 930.9 534.8 936.5 531.4C942.1 528.1 942.0 529.0 947.0 525.1C952.1 521.2 952.9 521.2 955.4 516.7C958.0 512.2 956.2 510.5 956.5 508.3" stroke-width="1.3"/><path d="M900.8 575.5C901.4 573.3 903.5 571.3 902.9 567.1C902.4 562.9 899.8 561.7 898.7 559.8" stroke-width="0.6"/><path d="M930.2 560.8C931.3 558.6 931.6 556.1 934.4 552.4C937.2 548.8 939.0 548.6 940.7 547.2" stroke-width="0.6"/><path d="M913.4 621.7C916.8 619.5 919.3 617.2 926.0 613.3C932.7 609.4 930.8 609.8 938.6 607.0C946.5 604.2 947.6 606.2 955.4 602.8C963.3 599.5 962.4 599.5 968.0 594.4C973.6 589.4 973.2 588.4 976.4 583.9C979.6 579.4 979.1 579.3 980.0 577.6" stroke-width="3.3"/><path d="M934.4 609.1C935.5 605.2 937.5 598.3 938.6 594.4" stroke-width="0.3"/><path d="M980.0 487.3C978.5 489.5 974.3 491.2 974.3 495.7C974.3 500.2 978.5 501.9 980.0 504.1" stroke-width="0.3"/><path d="M800.0 481.0C801.7 483.8 805.7 485.9 806.3 491.5C806.9 497.1 803.2 499.2 802.1 502.0" stroke-width="0.3"/><path d="M848.5 725.5C850.4 718.9 851.3 712.4 855.8 700.7C860.2 689.0 859.6 691.2 865.2 681.7C870.9 672.2 871.1 674.3 876.9 664.9C882.7 655.6 884.4 651.6 887.1 646.7" stroke-width="8.8"/><path d="M887.1 646.7C887.3 641.6 888.6 636.7 887.9 627.7C887.1 618.8 886.3 620.5 884.2 613.1C882.1 605.7 881.0 603.5 879.8 600.0" stroke-width="5.3"/><path d="M890.0 643.8C893.2 641.8 893.9 642.3 901.7 636.5C909.5 630.6 909.9 628.9 919.2 621.9C928.6 614.9 928.2 614.5 936.7 610.2C945.3 605.9 942.5 607.8 951.3 605.8C960.2 603.9 965.0 603.7 970.0 602.9" stroke-width="4.3"/><path d="M890.0 725.5C893.2 720.4 896.3 715.1 901.7 706.5C907.2 698.0 907.0 700.0 910.5 693.4C914.0 686.8 913.3 688.3 914.8 681.7C916.4 675.1 916.3 675.6 916.3 668.6C916.3 661.6 915.6 660.5 914.8 655.5C914.1 650.4 913.8 651.2 913.4 649.6" stroke-width="2.3"/><path d="M914.8 655.5C917.6 653.1 919.2 650.6 925.1 646.7C930.9 642.8 930.9 643.0 936.7 640.9C942.6 638.7 941.9 639.1 947.0 638.7C952.0 638.2 953.4 639.0 955.7 639.1" stroke-width="0.8"/><path d="M917.8 667.1C920.5 665.6 922.9 663.6 928.0 661.3C933.0 659.0 931.7 658.6 936.7 658.4C941.8 658.2 944.2 660.0 947.0 660.6" stroke-width="0.6"/><path d="M907.6 702.1C910.7 702.1 913.0 701.0 919.2 702.1C925.5 703.3 926.2 705.0 930.9 706.5C935.6 708.1 932.1 709.1 936.7 708.0C941.4 706.8 943.7 704.5 948.4 702.1C953.1 699.8 952.3 700.6 954.2 699.2C956.2 697.9 955.3 697.6 955.7 697.0" stroke-width="0.8"/><path d="M935.3 708.0C937.2 709.9 938.3 711.8 942.6 715.3C946.9 718.8 949.0 719.6 951.3 721.1" stroke-width="0.8"/><path d="M1110.6 728.1C1111.5 720.5 1112.2 714.1 1114.2 699.4C1116.1 684.8 1116.8 685.2 1117.8 673.1C1118.7 661.0 1117.8 659.1 1117.8 654.0" stroke-width="11.8"/><path d="M1117.8 654.0C1117.4 646.3 1118.1 637.4 1116.6 625.3C1115.0 613.1 1113.0 613.0 1111.8 608.5" stroke-width="7.8"/><path d="M1111.8 608.5C1109.5 602.8 1106.9 596.9 1103.4 587.0C1099.9 577.1 1101.5 578.1 1098.6 571.4C1095.7 564.7 1094.2 564.4 1092.6 561.9" stroke-width="3.8"/><path d="M1092.6 561.9C1090.1 559.0 1088.8 556.5 1083.1 551.1C1077.3 545.7 1076.2 547.3 1071.1 541.5C1066.0 535.8 1066.5 535.3 1063.9 529.6C1061.4 523.8 1062.2 522.6 1061.5 520.0" stroke-width="1.8"/><path d="M1118.9 620.5C1121.5 617.9 1123.4 616.7 1128.5 610.9C1133.6 605.2 1134.6 604.1 1138.1 598.9C1141.6 593.8 1140.7 593.7 1141.7 591.8" stroke-width="1.8"/><path d="M1102.2 572.6C1104.8 569.4 1106.0 565.8 1111.8 560.7C1117.5 555.6 1117.4 555.4 1123.7 553.5C1130.1 551.6 1131.2 556.0 1135.7 553.5C1140.2 550.9 1138.9 550.3 1140.5 543.9C1142.1 537.5 1142.3 535.9 1141.7 529.6C1141.0 523.2 1139.0 522.6 1138.1 520.0" stroke-width="2.8"/><path d="M1120.1 553.5C1120.5 550.9 1121.3 548.4 1121.3 543.9C1121.3 539.5 1120.5 538.7 1120.1 536.7" stroke-width="0.8"/><path d="M1083.1 551.1C1081.1 547.9 1077.2 544.9 1075.9 539.1C1074.6 533.4 1075.1 534.0 1078.3 529.6C1081.5 525.1 1085.3 524.3 1087.8 522.4" stroke-width="1.3"/><path d="M1063.9 543.9C1062.0 543.3 1058.7 542.2 1056.7 541.5" stroke-width="0.3"/><path d="M1104.6 701.8C1101.4 702.5 1098.4 702.3 1092.6 704.2C1086.9 706.1 1087.5 703.4 1083.1 709.0C1078.6 714.5 1077.8 720.7 1075.9 725.0" stroke-width="2.8"/><path d="M1138.1 725.0C1140.0 722.7 1142.1 719.2 1145.3 716.2C1148.5 713.2 1148.8 714.4 1150.0 713.8" stroke-width="0.3"/><path d="M800.0 360.0C802.7 357.9 804.7 355.7 810.0 352.0C815.3 348.3 814.1 348.1 820.0 346.0C825.9 343.9 826.1 344.8 832.0 344.0C837.9 343.2 839.3 343.3 842.0 343.0" stroke-width="0.8"/><path d="M800.0 366.0C803.2 365.5 805.1 364.3 812.0 364.0C818.9 363.7 819.1 363.9 826.0 365.0C832.9 366.1 833.2 365.1 838.0 368.0C842.8 370.9 841.9 369.6 844.0 376.0C846.1 382.4 845.2 386.7 846.0 392.0C846.8 397.3 846.7 394.9 847.0 396.0" stroke-width="0.8"/><path d="M838.0 368.0C842.8 368.5 848.5 370.3 856.0 370.0C863.5 369.7 860.9 368.3 866.0 367.0C871.1 365.7 872.6 365.5 875.0 365.0" stroke-width="0.8"/><path d="M846.0 376.0C848.7 376.3 853.3 376.7 856.0 377.0" stroke-width="0.3"/><path d="M800.0 414.0C801.6 410.8 801.7 407.3 806.0 402.0C810.3 396.7 811.2 397.2 816.0 394.0C820.8 390.8 821.9 391.1 824.0 390.0" stroke-width="0.8"/><path d="M800.0 452.0C801.6 455.2 803.9 456.5 806.0 464.0C808.1 471.5 806.4 472.5 808.0 480.0C809.6 487.5 810.4 486.7 812.0 492.0C813.6 497.3 813.5 497.9 814.0 500.0" stroke-width="0.8"/><path d="M808.0 480.0C810.1 478.9 812.8 477.6 816.0 476.0C819.2 474.4 818.9 474.5 820.0 474.0" stroke-width="0.3"/><path d="M906.0 340.0C909.7 341.1 910.9 343.5 920.0 344.0C929.1 344.5 929.9 343.1 940.0 342.0C950.1 340.9 953.2 340.5 958.0 340.0" stroke-width="0.3"/><path d="M984.0 340.0C988.3 342.7 992.5 344.7 1000.0 350.0C1007.5 355.3 1005.6 353.6 1012.0 360.0C1018.4 366.4 1020.8 370.3 1024.0 374.0" stroke-width="0.3"/><path d="M974.0 500.0C975.6 496.3 975.2 492.4 980.0 486.0C984.8 479.6 986.1 481.9 992.0 476.0C997.9 470.1 998.8 468.5 1002.0 464.0C1005.2 459.5 1003.5 460.3 1004.0 459.0" stroke-width="0.8"/><path d="M988.9 550.0C988.5 552.7 988.3 554.9 987.6 560.2C986.9 565.5 988.2 564.2 986.2 570.0C984.2 575.8 981.7 578.7 980.0 581.9" stroke-width="4.8"/><path d="M1012.0 550.0C1009.6 551.2 1008.4 551.5 1003.0 554.6C997.6 557.7 995.7 558.6 991.8 561.6C987.9 564.6 989.2 564.7 988.3 565.8" stroke-width="2.8"/><path d="M954.0 508.4C954.4 511.0 956.9 513.7 955.4 518.2C953.9 522.7 952.5 521.8 948.4 525.2C944.3 528.6 942.2 529.3 940.0 530.8" stroke-width="0.3"/><path d="M972.2 500.0C974.8 502.6 976.4 504.9 982.0 509.8C987.6 514.7 990.2 516.0 993.2 518.2" stroke-width="0.8"/><path d="M1071.6 500.0C1069.4 503.7 1065.8 506.5 1063.2 514.0C1060.6 521.5 1061.8 520.9 1061.8 528.0C1061.8 535.1 1060.6 535.0 1063.2 540.6C1065.8 546.2 1067.1 545.3 1071.6 549.0C1076.1 552.7 1077.8 553.1 1080.0 554.6" stroke-width="1.3"/></g>
<g fill="none" stroke="#395d58" stroke-linecap="round"><path d="M863.8 678.8C866.5 674.9 868.5 672.4 874.0 664.2C879.4 656.0 881.9 649.7 884.2 648.2C886.5 646.6 885.1 652.1 882.7 658.4C880.4 664.6 879.7 665.3 875.5 671.5C871.2 677.7 869.8 679.8 866.7 681.7C863.6 683.7 864.6 679.6 863.8 678.8" stroke-width="1"/><path d="M891.5 629.2C894.2 628.0 896.3 627.9 901.7 624.8C907.2 621.7 908.0 621.8 911.9 617.5C915.8 613.2 915.5 613.4 916.3 608.8C917.1 604.1 915.2 602.3 914.8 600.0" stroke-width="1"/><path d="M890.0 635.0C890.4 637.7 889.9 642.5 891.5 645.2C893.1 648.0 893.2 647.6 895.9 645.2C898.6 642.9 900.2 638.8 901.7 636.5" stroke-width="1"/><path d="M1107.0 575.0C1110.2 582.0 1113.2 593.7 1118.9 601.3C1124.7 609.0 1123.4 605.6 1128.5 603.7C1133.6 601.8 1135.5 596.7 1138.1 594.2" stroke-width="1"/><path d="M1111.8 663.5C1112.4 658.4 1112.2 652.7 1114.2 644.4C1116.1 636.1 1117.4 631.2 1118.9 632.4C1120.5 633.7 1120.8 640.9 1120.1 649.2C1119.5 657.5 1118.8 659.7 1116.6 663.5C1114.3 667.4 1113.0 663.5 1111.8 663.5" stroke-width="1"/><path d="M1114.2 673.1C1114.7 672.5 1115.1 670.7 1116.1 670.7C1117.1 670.7 1118.0 671.7 1118.0 673.1C1118.0 674.5 1117.1 676.0 1116.1 676.0C1115.1 676.0 1114.7 673.9 1114.2 673.1" stroke-width="1"/></g>
<path d="M616.0 241.0C617.9 240.5 620.1 239.7 624.0 239.0C627.9 238.3 628.6 235.4 632.5 237.8C636.4 240.2 633.9 246.5 640.7 249.5C647.5 252.5 653.5 245.5 661.7 250.7C669.9 255.9 668.1 261.9 675.7 271.7C683.3 281.5 686.9 284.5 694.3 292.7C701.6 300.9 705.0 302.6 707.2 306.7C709.4 310.8 701.8 306.4 703.7 310.2C705.6 314.0 711.0 314.6 715.3 323.0C719.6 331.4 719.3 336.5 722.3 346.3C725.3 356.1 727.6 358.7 728.2 365.0C728.8 371.3 732.1 368.3 724.7 373.2C717.4 378.1 711.4 380.8 696.7 386.0C682.0 391.2 675.3 392.3 661.7 395.3C648.1 398.3 647.1 398.5 638.3 398.8C629.5 399.1 629.2 397.4 624.0 396.5C618.8 395.6 617.9 395.4 616.0 395.0Z" fill="#16262c" stroke="#a9cbc3" stroke-width="1"/>
<path d="M629.0 297.3 L668.7 286.1 L676.1 303.2 L634.8 316.5Z" fill="none" stroke="#a9cbc3" stroke-width="1.1" stroke-linejoin="round"/>
<path d="M632.0 300.5 L667.0 290.5 L672.5 302.0 L636.5 313.0Z" fill="none" stroke="#a9cbc3" stroke-width="0.7" stroke-dasharray="3 2" opacity=".8"/>
<path d="M624.0 337.5C627.5 337.2 636.8 337.4 645.0 335.8C653.2 334.2 665.2 330.6 673.0 327.7C680.8 324.8 686.5 321.2 692.0 318.3C697.5 315.4 703.7 311.6 706.0 310.2" fill="none" stroke="#a9cbc3" stroke-width="1.1"/>
<path d="M669.8 328.800L675.7 354.500M676.800 327L683.100 346.300" fill="none" stroke="#a9cbc3" stroke-width="1"/>
<path d="M626 250l14 1M628 243l6 8" stroke="#a9cbc3" stroke-width="0.8" fill="none"/>
<clipPath id="bclip"><path d="M616.0 241.0C617.9 240.5 620.1 239.7 624.0 239.0C627.9 238.3 628.6 235.4 632.5 237.8C636.4 240.2 633.9 246.5 640.7 249.5C647.5 252.5 653.5 245.5 661.7 250.7C669.9 255.9 668.1 261.9 675.7 271.7C683.3 281.5 686.9 284.5 694.3 292.7C701.6 300.9 705.0 302.6 707.2 306.7C709.4 310.8 701.8 306.4 703.7 310.2C705.6 314.0 711.0 314.6 715.3 323.0C719.6 331.4 719.3 336.5 722.3 346.3C725.3 356.1 727.6 358.7 728.2 365.0C728.8 371.3 732.1 368.3 724.7 373.2C717.4 378.1 711.4 380.8 696.7 386.0C682.0 391.2 675.3 392.3 661.7 395.3C648.1 398.3 647.1 398.5 638.3 398.8C629.5 399.1 629.2 397.4 624.0 396.5C618.8 395.6 617.9 395.4 616.0 395.0Z"/></clipPath>
<path d="M649.0 366.8l2.7 9.6M680.1 347.6l2.0 11.0M650.7 354.4l4.0 8.8M696.9 364.1l3.3 6.9M680.8 379.7l3.0 10.4M683.7 347.6l3.5 9.5M654.1 346.2l3.7 8.8M687.5 380.2l3.4 11.5M661.6 377.0l2.9 11.6M700.3 348.9l2.3 7.3M707.2 362.4l3.3 7.8M670.6 360.4l2.7 9.5M676.7 381.2l3.4 11.6M698.5 384.6l3.3 7.0M698.9 383.6l3.8 9.4M687.1 353.4l3.7 9.4M652.8 347.5l3.7 11.9M637.1 377.0l2.8 6.9M653.5 375.8l3.7 6.3M679.2 346.8l3.4 8.0M700.5 384.2l3.0 12.0M654.8 348.1l3.2 6.2M645.8 361.3l3.2 6.9M633.4 379.7l2.6 11.8M701.7 360.1l2.9 9.1M681.5 368.8l3.1 9.7M675.0 271.2l11.4 -2.4M639.9 265.8l15.8 -2.0M655.4 258.3l11.3 -2.2M629.0 274.0l13.1 -1.1M659.4 270.1l13.4 -1.7M663.3 277.2l8.2 -1.1M661.8 283.0l10.0 -1.9M657.6 266.3l10.9 -1.6M646.5 273.5l10.4 -1.8M666.6 258.7l12.6 -2.5M643.5 263.8l14.4 -1.5M637.4 269.3l13.6 -1.2M644.1 266.7l14.7 -1.9M670.8 262.4l10.7 -2.3" stroke="#a9cbc3" stroke-width="0.600" opacity=".35" clip-path="url(#bclip)" fill="none"/>
<path d="M1132.0 271.0C1130.3 267.3 1129.0 262.2 1125.5 257.0C1122.0 251.8 1122.5 249.1 1119.0 251.5C1115.5 253.9 1114.5 254.4 1112.5 266.0C1110.5 277.6 1110.6 280.3 1111.5 295.0C1112.4 309.7 1112.1 307.9 1116.0 321.0C1119.9 334.1 1119.7 332.8 1126.0 344.0C1132.3 355.2 1133.4 355.5 1139.5 363.0C1145.6 370.5 1146.5 369.6 1149.0 372.0" fill="none" stroke="#a9cbc3" stroke-width="8.200" stroke-linecap="round" opacity=".8"/>
<path d="M1132.0 271.0C1130.3 267.3 1129.0 262.2 1125.5 257.0C1122.0 251.8 1122.5 249.1 1119.0 251.5C1115.5 253.9 1114.5 254.4 1112.5 266.0C1110.5 277.6 1110.6 280.3 1111.5 295.0C1112.4 309.7 1112.1 307.9 1116.0 321.0C1119.9 334.1 1119.7 332.8 1126.0 344.0C1132.3 355.2 1133.4 355.5 1139.5 363.0C1145.6 370.5 1146.5 369.6 1149.0 372.0" fill="none" stroke="#16262c" stroke-width="6.800" stroke-linecap="round"/>
<path d="M1119.0 251.5C1117.3 255.4 1114.5 254.4 1112.5 266.0C1110.5 277.6 1110.6 280.3 1111.5 295.0C1112.4 309.7 1112.1 307.9 1116.0 321.0C1119.9 334.1 1119.7 332.8 1126.0 344.0C1132.3 355.2 1133.4 355.5 1139.5 363.0C1145.6 370.5 1146.5 369.6 1149.0 372.0" fill="none" stroke="#a9cbc3" stroke-width="0.700" stroke-dasharray="4 3" opacity=".7"/>
<path d="M1125.0 272.0C1127.7 268.2 1130.6 264.8 1136.0 262.0C1141.4 259.2 1148.8 230.4 1152.0 258.0C1155.2 285.6 1152.7 372.1 1152.0 400.0C1151.3 427.9 1150.3 400.7 1148.7 397.7C1147.1 394.7 1145.2 391.7 1144.0 385.0C1142.8 378.3 1144.3 374.7 1142.8 364.4C1141.3 354.1 1139.5 343.9 1136.4 333.6C1133.3 323.3 1130.2 320.2 1127.4 313.0C1124.6 305.8 1123.3 304.1 1122.3 297.7C1121.3 291.3 1122.1 286.1 1122.6 281.0C1123.1 275.9 1122.3 275.8 1125.0 272.0Z" fill="#16262c" stroke="#a9cbc3" stroke-width="0.8"/>
<path d="M1133.800 259C1135 250 1141 244 1150 242.500" fill="none" stroke="#16262c" stroke-width="2.600"/>
<path d="M1124 283c5-3 9-1 11 4M1123 291c5-2 9 0 12 4M1124 298c4-1 8 0 10 3M1135 287l1 16" fill="none" stroke="#a9cbc3" stroke-width="0.800"/>
<path d="M1130 312l12 40M1134 308l11 36" fill="none" stroke="#a9cbc3" stroke-width="0.600" opacity=".7"/>
<clipPath id="fclip"><path d="M704.8 463.5C700.6 462.4 695.3 465.8 692.0 468.7C688.7 471.6 686.2 477.1 682.7 482.7C679.2 488.3 673.6 497.6 668.7 506.0C663.8 514.4 655.2 529.6 650.0 538.7C644.8 547.8 637.4 558.3 633.7 566.7C630.0 575.1 627.6 589.7 625.5 594.7C623.4 599.7 620.8 591.7 620.0 600.0C619.2 608.3 619.0 642.5 620.0 650.0C621.0 657.5 624.8 652.0 626.7 650.0C628.6 648.0 629.7 639.6 632.5 636.7C635.3 633.8 644.1 633.3 645.3 630.8C646.5 628.3 639.1 622.4 640.7 620.3C642.3 618.2 655.2 618.6 655.8 616.8C656.4 615.0 644.8 612.0 645.0 608.0C645.2 604.0 652.6 593.8 657.0 590.0C661.4 586.2 673.3 585.3 674.5 583.0C675.7 580.7 663.6 577.1 665.2 574.8C666.8 572.5 684.1 569.9 685.0 567.8C685.9 565.7 670.3 562.5 671.0 560.8C671.7 559.1 684.8 558.5 689.7 556.2C694.6 553.9 699.5 549.7 703.7 545.7C707.9 541.7 714.0 534.2 717.7 529.3C721.4 524.4 726.5 517.9 728.2 513.0C729.9 508.1 730.5 502.3 729.3 496.7C728.1 491.1 723.7 480.7 720.0 475.7C716.3 470.7 709.0 464.6 704.8 463.5Z"/></clipPath>
<path d="M704.8 463.5C700.6 462.4 695.3 465.8 692.0 468.7C688.7 471.6 686.2 477.1 682.7 482.7C679.2 488.3 673.6 497.6 668.7 506.0C663.8 514.4 655.2 529.6 650.0 538.7C644.8 547.8 637.4 558.3 633.7 566.7C630.0 575.1 627.6 589.7 625.5 594.7C623.4 599.7 620.8 591.7 620.0 600.0C619.2 608.3 619.0 642.5 620.0 650.0C621.0 657.5 624.8 652.0 626.7 650.0C628.6 648.0 629.7 639.6 632.5 636.7C635.3 633.8 644.1 633.3 645.3 630.8C646.5 628.3 639.1 622.4 640.7 620.3C642.3 618.2 655.2 618.6 655.8 616.8C656.4 615.0 644.8 612.0 645.0 608.0C645.2 604.0 652.6 593.8 657.0 590.0C661.4 586.2 673.3 585.3 674.5 583.0C675.7 580.7 663.6 577.1 665.2 574.8C666.8 572.5 684.1 569.9 685.0 567.8C685.9 565.7 670.3 562.5 671.0 560.8C671.7 559.1 684.8 558.5 689.7 556.2C694.6 553.9 699.5 549.7 703.7 545.7C707.9 541.7 714.0 534.2 717.7 529.3C721.4 524.4 726.5 517.9 728.2 513.0C729.9 508.1 730.5 502.3 729.3 496.7C728.1 491.1 723.7 480.7 720.0 475.7C716.3 470.7 709.0 464.6 704.8 463.5Z" fill="#16262c"/>
<path d="M700.0 462.0C703.2 463.6 706.1 463.7 712.0 468.0C717.9 472.3 717.3 470.3 722.0 478.0C726.7 485.7 727.8 487.4 729.5 496.7C731.2 506.0 731.6 504.3 728.5 513.0C725.4 521.7 724.5 520.7 718.0 529.5C711.5 538.3 711.5 538.8 704.0 546.0C696.5 553.2 698.0 552.5 690.0 556.5C682.0 560.5 678.3 559.8 674.0 561.0" fill="none" stroke="#3a5854" stroke-width="9" clip-path="url(#fclip)" opacity=".9"/>
<path d="M668.0 512.0l9.0 -16.0M664.9 518.8l9.2 -16.3M661.8 525.5l9.5 -16.6M658.8 532.3l9.7 -16.9M655.7 539.1l9.9 -17.2M652.6 545.8l10.2 -17.5M649.5 552.6l10.4 -17.8M646.5 559.4l10.6 -18.2M643.4 566.2l10.8 -18.5M640.3 572.9l11.1 -18.8M637.2 579.7l11.3 -19.1M634.2 586.5l11.5 -19.4M631.1 593.2l11.8 -19.7M628.0 600.0l12.0 -20.0" stroke="#a9cbc3" stroke-width="0.600" opacity=".55" clip-path="url(#fclip)" fill="none"/>
<path d="M692.0 473.3C697.2 470.2 699.0 469.9 705.0 471.5C711.0 473.1 713.4 472.8 717.7 480.3C722.0 487.8 726.8 493.3 723.5 503.7C720.2 514.1 714.9 516.8 703.7 524.7C692.5 532.6 683.6 535.9 675.7 537.5C667.8 539.1 670.4 538.5 669.8 531.7C669.2 524.9 670.3 519.2 673.3 508.3C676.3 497.4 678.3 493.2 682.7 485.0C687.1 476.8 686.8 476.4 692.0 473.3Z" fill="none" stroke="#a9cbc3" stroke-width="1"/>
<path d="M669.800 536.300C655 560 636 600 625.500 643M672.500 538.500C659 562 640 602 628 645" fill="none" stroke="#a9cbc3" stroke-width="0.800"/>
<path d="M678 530c14-2 28-10 40-24" fill="none" stroke="#a9cbc3" stroke-width="0.800" opacity=".8"/>
<path d="M807.4 574.9C801.4 575.6 799.3 575.4 793.5 579.8C787.7 584.2 786.3 585.3 782.6 593.7C778.9 602.1 778.1 605.4 777.6 615.6C777.1 625.8 778.1 627.7 780.6 637.4C783.1 647.1 784.3 649.3 788.5 657.2C792.7 665.1 795.0 666.5 798.5 671.1C802.0 675.7 802.8 678.2 803.4 677.0C804.0 675.8 801.9 671.1 801.0 666.0C800.1 660.9 797.9 662.3 799.4 655.2C800.9 648.1 802.8 644.2 807.4 635.4C812.0 626.6 814.7 625.8 819.3 617.5C823.9 609.2 825.4 607.1 827.2 599.7C829.0 592.3 829.0 591.1 827.2 585.8C825.4 580.5 823.9 579.4 819.3 576.9C814.7 574.4 813.4 574.2 807.4 574.9Z" fill="#16262c" stroke="#a9cbc3" stroke-width="1"/>
<path d="M741.9 657.2C743.0 653.3 745.2 652.4 749.8 650.3C754.4 648.2 755.7 647.6 761.7 648.3C767.7 649.0 769.1 649.4 775.6 653.3C782.1 657.2 782.3 658.3 789.5 665.2C796.7 672.1 806.4 678.6 806.4 683.0C806.4 687.4 798.1 684.5 789.5 684.0C780.9 683.5 778.0 683.1 769.7 681.0C761.4 678.9 759.6 678.3 753.8 675.1C748.0 671.9 747.7 671.3 744.9 667.1C742.1 662.9 740.8 661.1 741.9 657.2Z" fill="#16262c" stroke="#a9cbc3" stroke-width="0.900"/>
<path d="M803.400 677C812 686 816 697 817.300 712" fill="none" stroke="#a9cbc3" stroke-width="1.200"/>
<path d="M800 670C786 640 786 610 800 592M757 662C772 664 790 672 800 680" fill="none" stroke="#a9cbc3" stroke-width="0.700" opacity=".8"/>
<path d="M799.4 723.0 L809.4 702.9 L815.3 705.8 L818.3 716.7 L821.3 712.8 L831.2 705.8 L835.5 723.0Z" fill="#16262c"/>
<path d="M818.300 716.700L816 723" stroke="#a9cbc3" stroke-width="1"/>
<g transform="translate(1027.100 656.650) rotate(7.400)" fill="#16262c" stroke="#a9cbc3" stroke-width="0.900" stroke-opacity=".8" stroke-linejoin="round">
<g transform="rotate(0)">
<path d="M-32.5 -37v-16.500h5v-14.500h7v14.500h5v16.500z" transform="rotate(-5 -24 -38)"/>
<path d="M-8.5 -37v-16.500h5v-14.500h7v14.500h5v16.500z" transform="rotate(-5 0 -38)"/>
<path d="M15.5 -37v-16.500h5v-14.500h7v14.500h5v16.500z" transform="rotate(-5 24 -38)"/>
</g>
<g transform="rotate(90)">
<path d="M-32.5 -37v-16.500h5v-14.500h7v14.500h5v16.500z" transform="rotate(-5 -24 -38)"/>
<path d="M-8.5 -37v-16.500h5v-14.500h7v14.500h5v16.500z" transform="rotate(-5 0 -38)"/>
<path d="M15.5 -37v-16.500h5v-14.500h7v14.500h5v16.500z" transform="rotate(-5 24 -38)"/>
</g>
<g transform="rotate(180)">
<path d="M-32.5 -37v-16.500h5v-14.500h7v14.500h5v16.500z" transform="rotate(-5 -24 -38)"/>
<path d="M-8.5 -37v-16.500h5v-14.500h7v14.500h5v16.500z" transform="rotate(-5 0 -38)"/>
<path d="M15.5 -37v-16.500h5v-14.500h7v14.500h5v16.500z" transform="rotate(-5 24 -38)"/>
</g>
<g transform="rotate(270)">
<path d="M-32.5 -37v-16.500h5v-14.500h7v14.500h5v16.500z" transform="rotate(-5 -24 -38)"/>
<path d="M-8.5 -37v-16.500h5v-14.500h7v14.500h5v16.500z" transform="rotate(-5 0 -38)"/>
<path d="M15.5 -37v-16.500h5v-14.500h7v14.500h5v16.500z" transform="rotate(-5 24 -38)"/>
</g>
<rect x="-38.500" y="-38.500" width="77" height="77" rx="6"/>
<rect x="-25" y="-25" width="50" height="50" rx="2" fill="none" stroke-width="1.200"/>
</g>
<path d="M830.0 425.0C832.7 421.0 832.0 422.1 840.0 417.0C848.0 411.9 849.3 411.1 860.0 406.0C870.7 400.9 869.3 402.3 880.0 398.0C890.7 393.7 889.3 394.3 900.0 390.0C910.7 385.7 909.3 386.0 920.0 382.0C930.7 378.0 929.3 378.3 940.0 375.0C950.7 371.7 949.3 372.1 960.0 369.6C970.7 367.1 971.5 366.8 980.0 365.6C988.5 364.4 986.7 364.4 992.0 365.0C997.3 365.6 996.3 365.1 1000.0 368.0C1003.7 370.9 1003.6 371.2 1006.0 376.0C1008.4 380.8 1007.7 379.6 1009.0 386.0C1010.3 392.4 1010.2 393.6 1011.0 400.0C1011.8 406.4 1012.0 404.7 1012.0 410.0C1012.0 415.3 1012.6 415.7 1011.0 420.0C1009.4 424.3 1011.6 421.5 1006.0 426.0C1000.4 430.5 999.6 431.7 990.0 437.0C980.4 442.3 980.7 441.5 970.0 446.0C959.3 450.5 960.7 450.3 950.0 454.0C939.3 457.7 940.7 457.1 930.0 460.0C919.3 462.9 920.7 462.9 910.0 465.0C899.3 467.1 900.7 466.9 890.0 468.0C879.3 469.1 880.1 469.3 870.0 469.0C859.9 468.7 859.2 468.6 852.0 467.0C844.8 465.4 846.7 466.5 843.0 463.0C839.3 459.5 840.7 459.6 838.0 454.0C835.3 448.4 835.1 447.9 833.0 442.0C830.9 436.1 830.8 436.5 830.0 432.0C829.2 427.5 827.3 429.0 830.0 425.0Z" fill="#16262c"/>
<path d="M862.0 433.6C860.4 432.1 862.5 432.4 870.0 428.0C877.5 423.6 879.3 422.1 890.0 417.0C900.7 411.9 899.3 412.7 910.0 409.0C920.7 405.3 919.3 405.7 930.0 403.0C940.7 400.3 939.3 400.6 950.0 399.0C960.7 397.4 962.3 397.3 970.0 397.0C977.7 396.7 979.0 396.1 979.0 398.0C979.0 399.9 977.7 400.0 970.0 404.0C962.3 408.0 960.7 408.7 950.0 413.0C939.3 417.3 940.7 416.5 930.0 420.0C919.3 423.5 920.7 423.1 910.0 426.0C899.3 428.9 899.1 429.0 890.0 431.0C880.9 433.0 883.5 432.9 876.0 433.6C868.5 434.3 863.6 435.1 862.0 433.6Z" fill="#648174"/>
<path d="M876 397l2 9 3-1 2 8" fill="none" stroke="#648174" stroke-width="0.800"/>
<clipPath id="bandclip"><path d="M830.0 425.0C832.7 421.0 832.0 422.1 840.0 417.0C848.0 411.9 849.3 411.1 860.0 406.0C870.7 400.9 869.3 402.3 880.0 398.0C890.7 393.7 889.3 394.3 900.0 390.0C910.7 385.7 909.3 386.0 920.0 382.0C930.7 378.0 929.3 378.3 940.0 375.0C950.7 371.7 949.3 372.1 960.0 369.6C970.7 367.1 971.5 366.8 980.0 365.6C988.5 364.4 986.7 364.4 992.0 365.0C997.3 365.6 996.3 365.1 1000.0 368.0C1003.7 370.9 1003.6 371.2 1006.0 376.0C1008.4 380.8 1007.7 379.6 1009.0 386.0C1010.3 392.4 1010.2 393.6 1011.0 400.0C1011.8 406.4 1012.0 404.7 1012.0 410.0C1012.0 415.3 1012.6 415.7 1011.0 420.0C1009.4 424.3 1011.6 421.5 1006.0 426.0C1000.4 430.5 999.6 431.7 990.0 437.0C980.4 442.3 980.7 441.5 970.0 446.0C959.3 450.5 960.7 450.3 950.0 454.0C939.3 457.7 940.7 457.1 930.0 460.0C919.3 462.9 920.7 462.9 910.0 465.0C899.3 467.1 900.7 466.9 890.0 468.0C879.3 469.1 880.1 469.3 870.0 469.0C859.9 468.7 859.2 468.6 852.0 467.0C844.8 465.4 846.7 466.5 843.0 463.0C839.3 459.5 840.7 459.6 838.0 454.0C835.3 448.4 835.1 447.9 833.0 442.0C830.9 436.1 830.8 436.5 830.0 432.0C829.2 427.5 827.3 429.0 830.0 425.0Z"/></clipPath>
<path d="M939.7 448.4l14.0 -3.8M990.8 434.6l15.2 -4.1M844.6 468.0l15.4 -4.2M943.8 450.8l7.1 -1.9M915.1 444.2l11.4 -3.1M931.8 434.5l8.2 -2.2M884.7 467.1l13.7 -3.7M865.5 469.6l7.4 -2.0M938.8 435.1l6.0 -1.6M979.4 426.0l8.2 -2.2M997.2 435.8l8.9 -2.4M993.8 429.3l12.8 -3.5M872.8 470.9l12.9 -3.5M994.7 436.9l9.0 -2.4M897.8 447.0l7.5 -2.0M850.4 462.8l12.0 -3.2M840.5 473.8l9.4 -2.5M889.6 463.6l10.8 -2.9M890.5 455.9l13.0 -3.5M849.1 478.0l6.2 -1.7M960.0 445.2l6.2 -1.7M966.0 433.0l11.8 -3.2M841.5 459.6l7.8 -2.1M992.8 422.1l13.6 -3.7M988.7 439.6l9.4 -2.5M896.8 455.2l13.8 -3.7M857.3 470.8l14.0 -3.8M977.6 422.7l15.5 -4.2M854.6 462.6l12.1 -3.3M986.9 426.8l15.2 -4.1M927.2 442.3l9.2 -2.5M868.4 453.1l7.5 -2.0M950.3 451.2l7.6 -2.1M847.8 478.6l11.3 -3.1M904.9 446.7l11.9 -3.2M972.2 433.3l10.2 -2.8M848.9 476.7l6.3 -1.7M919.0 456.1l7.3 -2.0M957.1 448.3l12.3 -3.3M966.1 427.3l10.3 -2.8" stroke="#a9cbc3" stroke-width="0.700" opacity=".22" clip-path="url(#bandclip)" fill="none"/>
<path d="M832 428C870 400 940 372 996 367" fill="none" stroke="#a9cbc3" stroke-width="0.500" opacity=".5"/>
<g transform="matrix(1 -0.280 0.100 1 891.500 443)" fill="none" stroke="#c2d6d2" stroke-width="2.700" stroke-linejoin="round" stroke-linecap="butt">
<rect x="2" y="0" width="16.5" height="16.500" rx="2.500"/>
<path d="M24 0h13q2 0 2 2v4.250q0 2 -2 2h-11q-2 0 -2 2v4.250q0 2 2 2h13"/>
<rect x="50" y="0" width="15.5" height="16.500" rx="2.500"/>
<path d="M70.5 0h13q2 0 2 2v4.250q0 2 -2 2h-11q-2 0 -2 2v4.250q0 2 2 2h13"/>
<path d="M45 4v2.600M45 11v2.600" stroke-width="2.600"/>
</g>
<path d="M800.500 230h22.500c-3 4.500-8 6-12.500 5.500-4-0.500-8-2-10-5.500z" fill="#16262c"/>
<path d="M812 238c2 6 5 9 9 11M816 238c3 3 7 4 12 3" fill="none" stroke="#a9cbc3" stroke-width="0.900"/>
<path d="M1015 199h8v6.500h-8zM1041 199h5v6h-5z" fill="#16262c"/>
<path d="M1143 628c3 6 5.500 14 5.500 24v36c-2-8-4-18-4.500-28-0.500-12-1-22-1-32z" fill="#16262c"/>
</svg></div>
<style>
#dlg{position:absolute;left:488px;top:129px;width:442px;height:101px;background:#535353;border:1px solid #1a7fd0;box-shadow:0 2px 6px rgba(0,0,0,.35);}
#dlgtitle{position:absolute;left:0;top:0;width:440px;height:26px;background:#097ddf;color:#a8e8ff;font-size:10.5px;line-height:27px;padding-left:7px;white-space:nowrap}
#dlgx{position:absolute;left:420px;top:8px;}
#thumb{position:absolute;left:9px;top:34px;width:57px;height:57px;background:#6e9185;overflow:hidden;border:1px solid #5f6f69}
#lbl{position:absolute;left:84px;top:56px;color:#dcdcdc;font-size:10.5px;line-height:12px;}
#inp{position:absolute;left:111px;top:51px;width:245px;height:20px;background:#494949;border:2px solid #1d5f9f;color:#f0f0f0;font-size:10.5px;line-height:17px;padding-left:5px;padding-top:1.5px;}
.btn{position:absolute;left:363px;width:67px;height:23px;border-radius:12px;color:#e8e8e8;font-size:10.5px;line-height:21.500px;text-align:center;}
#ok{top:36px;border:1.5px solid #d0d0d0;}
#cancel{top:67px;height:22px;border:1px solid #7a7a7a;}
</style>
<div id="dlg">
  <div id="dlgtitle">Имя узора</div>
  <svg id="dlgx" width="9" height="9" viewBox="0 0 10 10"><path d="M0.500 0.500l9 9M9.500 0.500l-9 9" stroke="#7fe9ff" stroke-width="1.200"/></svg>
  <div id="thumb"><svg width="57" height="57" viewBox="0 0 57 57">
    <path d="M2 18c4-1 8 4 9 10l-8 3z" fill="#1c3138"/>
    <path d="M22 24c5-4 12-6 15-4 1 2-6 7-13 9-3 0-3-3-2-5z" fill="#1c3138"/>
    <path d="M25.500 25c4-2.500 8-3.500 10-3" stroke="#8fb3a8" stroke-width="1" fill="none"/>
    <path d="M12 30c-3 5-6 9-9 14 2 0 8-6 11-13z" fill="#1c3138"/>
    <path d="M20 42c-1 3-3 6-6 8l3 1c2-2 4-5 5-8z" fill="#1c3138"/>
    <path d="M41 44l2 3 3-4 0 4 4-1-3 3 3 3-4 0 0 4-3-3-3 3 0-4-4 0 3-3-3-3z" fill="#1c3138"/>
    <path d="M53 8c2 2 3 6 2 10l-2-1c0-3-1-6 0-9z" fill="#1c3138"/>
    <path d="M19 2h4v3h-4z" fill="#1c3138"/>
    <path d="M5 8c8 3 14 1 20 6M30 10c6 2 12 0 18 5M8 52c8-4 16-2 22-8M34 34c6 2 12 0 18 4M2 40c6-2 10 2 16-2M28 48c4 2 8-2 12 2M40 20c4 4 8 2 12 8M10 14c2 6 8 8 8 14" stroke="#4f7268" stroke-width="0.900" fill="none"/><path id="noise" d="M25.8 31.9l2.1 -0.2M28.9 33.5l-1.6 0.1M35.9 45.2l-2.0 -1.0M5.2 46.1l1.0 -2.3M56.0 55.0l0.8 0.6M9.0 0.9l0.1 -2.2M10.8 13.8l-2.3 -0.2M25.1 48.0l0.1 0.7M28.5 37.8l-0.2 -1.1M56.9 56.8l1.7 1.0M18.0 13.1l-1.1 -2.1M43.7 22.8l1.7 -0.6M54.6 48.3l-2.5 -1.5M51.9 26.8l2.4 -0.5M4.2 35.9l1.4 -1.2M5.0 19.0l2.3 1.3M6.7 14.0l-2.0 -2.2M45.4 10.1l0.3 -0.3M10.9 41.7l-1.8 0.7M6.6 24.0l-1.4 -1.2M55.3 45.8l-1.0 1.9M12.0 22.5l1.8 0.7M5.7 56.4l-1.4 -1.2M44.0 18.8l-1.0 -2.1M5.1 33.2l-1.3 0.5M21.2 25.8l2.3 -0.1M32.8 49.4l-1.6 -1.7M51.8 46.6l-1.3 -1.6M42.1 53.6l-1.5 2.3M50.3 34.4l-0.4 -2.0M2.2 54.9l-1.3 1.0M14.6 47.0l0.5 -1.0M10.0 41.1l-2.2 -1.4M31.9 48.6l0.6 -1.1M52.3 11.6l-2.4 -1.2M25.4 3.4l-1.6 -0.7M32.6 7.5l-0.7 2.0M55.9 37.4l1.0 0.4M8.0 2.0l-2.4 2.1M40.0 54.9l-2.4 0.7M27.5 41.6l-0.9 2.5M4.3 31.1l1.2 2.0M42.0 40.1l1.5 2.1M20.1 39.1l2.0 1.9M23.8 45.1l1.8 0.4M35.6 21.8l0.4 0.5M4.6 36.4l2.5 1.9M41.5 22.1l1.2 0.4M25.1 47.8l-2.1 1.3M1.7 34.3l-0.1 -1.3M39.8 28.3l0.6 2.1M14.6 0.6l-1.0 0.9M11.5 9.7l2.0 0.8M25.2 50.8l-0.9 0.8M11.3 24.6l1.5 2.1M50.2 21.9l0.4 -0.9M7.8 28.3l1.7 1.7M40.5 54.2l-1.1 -1.7M25.7 15.7l-1.4 -0.4M35.7 28.2l-0.9 1.7" stroke="#54766b" stroke-width="0.700" fill="none" opacity=".8"/>
  </svg></div>
  <div id="lbl">Имя:</div>
  <div id="inp">222</div>
  <div class="btn" id="ok">OK</div>
  <div class="btn" id="cancel">Отмена</div>
</div>
</body></html>
